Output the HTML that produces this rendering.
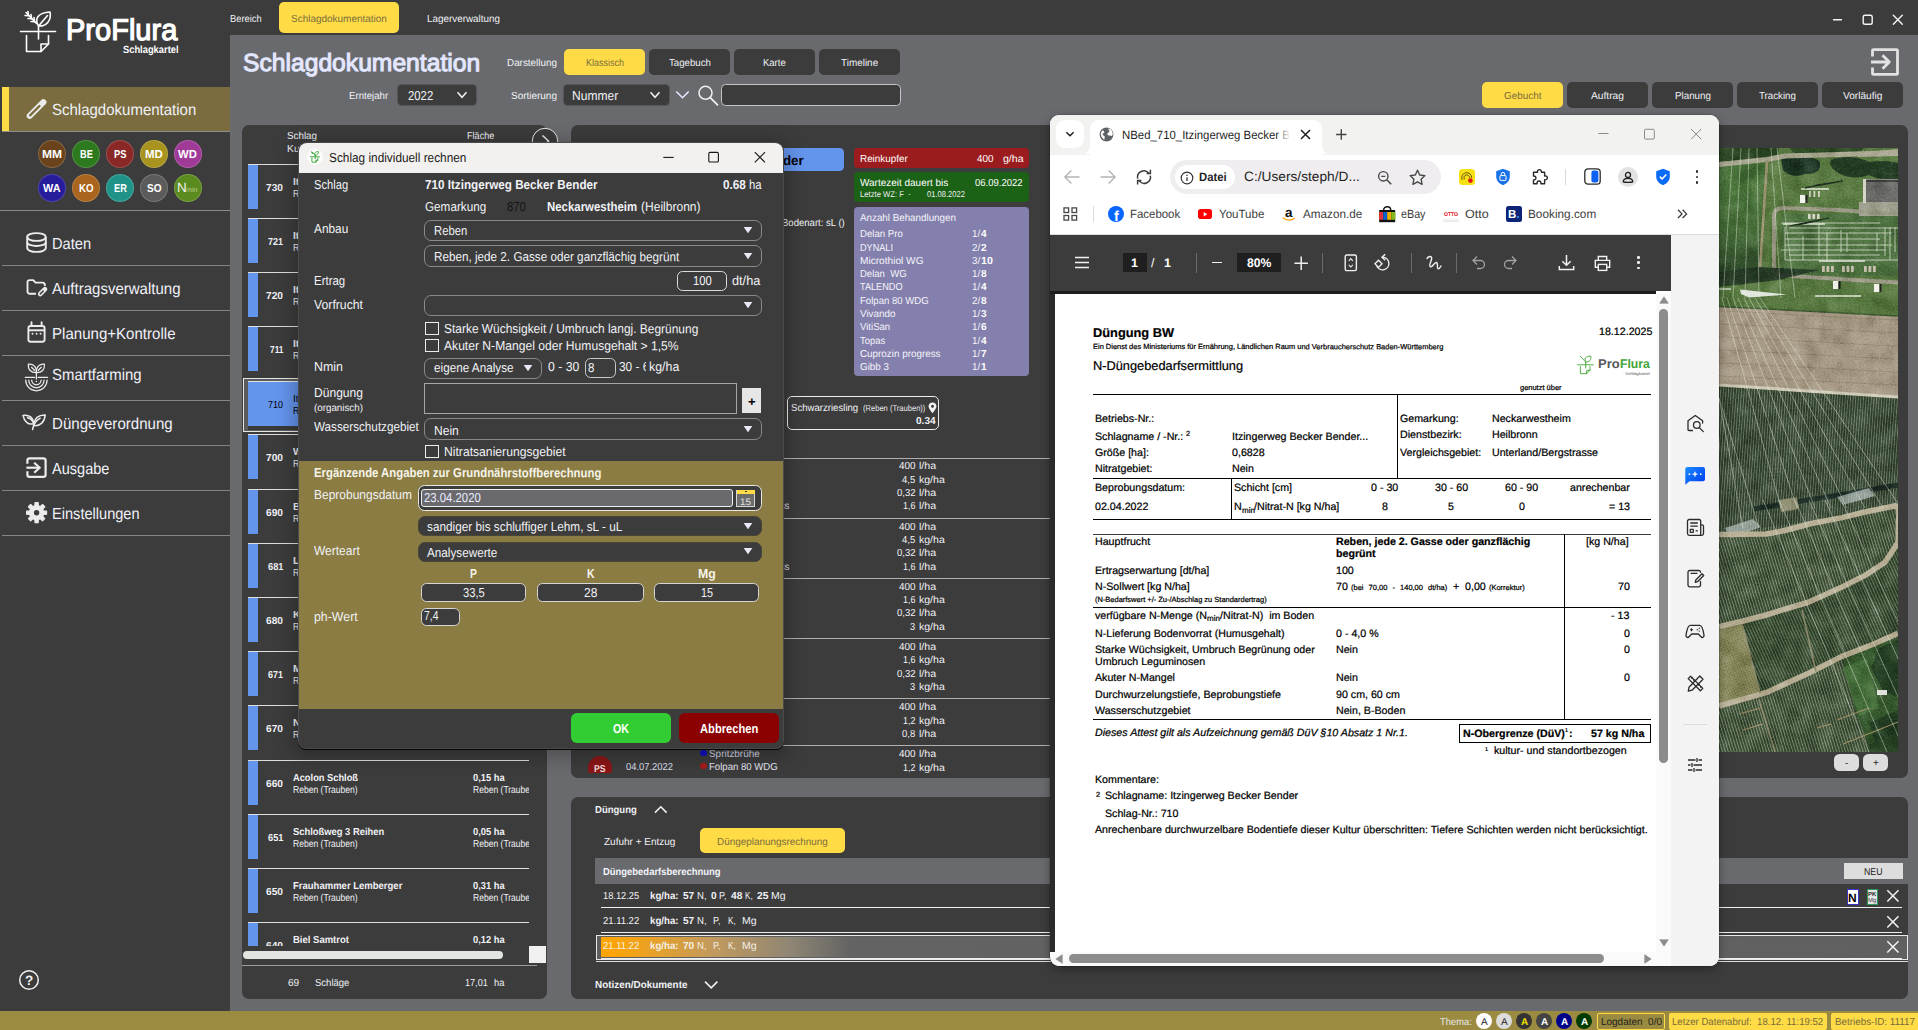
<!DOCTYPE html>
<html lang="de"><head><meta charset="utf-8"><title>ProFlura Schlagkartei</title>
<style>
html,body{margin:0;padding:0;}
body{width:1918px;height:1030px;overflow:hidden;background:#3c3c3c;position:relative;
font-family:"Liberation Sans",sans-serif;-webkit-font-smoothing:antialiased;}
div,svg{position:absolute;}
.t{white-space:nowrap;transform-origin:0 50%;}
.clip{overflow:hidden;}
svg{overflow:visible;}
svg text{font-family:"Liberation Sans",sans-serif;}
</style></head><body>
<!-- sec_base -->
<div style="left:230px;top:35px;width:1688px;height:976px;background:#696a6e;"></div>
<div style="left:0px;top:1011px;width:1918px;height:19px;background:#9a8b40;"></div>
<svg style="left:19px;top:9px;" width="40" height="46" viewBox="0 0 40 46">
<g fill="none" stroke="#fff" stroke-width="1.6" stroke-linecap="round" stroke-linejoin="round">
<path d="M1.5 22.5H36.5"/>
<path d="M7.5 26.5V42.5H22L29.5 35V26.5"/>
<path d="M22 42.5V35H29.5"/>
<path d="M19.5 30V17"/>
<path d="M19.5 17C15 10 19 3.5 31 3C32.5 11 28 17.5 19.500 17Z"/>
<path d="M20 16.500L28.500 6.500"/>
<path d="M17.5 14.5L7 3.5"/>
<path d="M6 6.500L10 6.800M9 2.500L9.500 6.500M9 9.500L13 9.800M12 5.500L12.500 9.500M12 12.500L15.500 12.800M15 8.500L15.500 12"/>
</g></svg>
<div class="t" style="left:65.5px;top:15px;font-size:30px;line-height:30px;color:#fff;transform:matrix(0.9679,0.0006,0,1,0,0);-webkit-text-stroke:1.2px #fff;">ProFlura</div>
<div class="t" style="left:122.5px;top:44px;font-size:10.5px;line-height:10.5px;color:#fff;font-weight:700;transform:matrix(0.8891,0.0006,0,1,0,0);">Schlagkartel</div>
<div style="left:2px;top:87px;width:228px;height:44px;background:#7a6c3e;"></div>
<div style="left:2px;top:87px;width:6.5px;height:44px;background:#ffdc46;"></div>
<div style="left:2px;top:131px;width:228px;height:1px;background:#8f8f8f;"></div>
<div style="left:0px;top:209.5px;width:230px;height:1.6px;background:#8a8a8a;"></div>
<div style="left:2px;top:264.5px;width:228px;height:1.3px;background:#858585;"></div>
<div style="left:2px;top:309.5px;width:228px;height:1.3px;background:#858585;"></div>
<div style="left:2px;top:354.5px;width:228px;height:1.3px;background:#858585;"></div>
<div style="left:2px;top:399.5px;width:228px;height:1.3px;background:#858585;"></div>
<div style="left:2px;top:444.5px;width:228px;height:1.3px;background:#858585;"></div>
<div style="left:2px;top:489.5px;width:228px;height:1.3px;background:#858585;"></div>
<div style="left:2px;top:534.5px;width:228px;height:1.3px;background:#858585;"></div>
<div class="t" style="left:52px;top:102px;font-size:16px;line-height:16px;color:#f0f1f8;transform:matrix(0.9375,0.0006,0,1,0,0);">Schlagdokumentation</div>
<div class="t" style="left:52px;top:236px;font-size:16px;line-height:16px;color:#f0f1f8;transform:matrix(0.9176,0.0006,0,1,0,0);">Daten</div>
<div class="t" style="left:52px;top:281px;font-size:16px;line-height:16px;color:#f0f1f8;transform:matrix(0.9382,0.0006,0,1,0,0);">Auftragsverwaltung</div>
<div class="t" style="left:52px;top:326px;font-size:16px;line-height:16px;color:#f0f1f8;transform:matrix(0.9413,0.0006,0,1,0,0);">Planung+Kontrolle</div>
<div class="t" style="left:52px;top:367px;font-size:16px;line-height:16px;color:#f0f1f8;transform:matrix(0.9333,0.0006,0,1,0,0);">Smartfarming</div>
<div class="t" style="left:52px;top:416px;font-size:16px;line-height:16px;color:#f0f1f8;transform:matrix(0.9424,0.0006,0,1,0,0);">Düngeverordnung</div>
<div class="t" style="left:52px;top:461px;font-size:16px;line-height:16px;color:#f0f1f8;transform:matrix(0.9098,0.0006,0,1,0,0);">Ausgabe</div>
<div class="t" style="left:52px;top:506px;font-size:16px;line-height:16px;color:#f0f1f8;transform:matrix(0.9117,0.0006,0,1,0,0);">Einstellungen</div>
<svg style="left:0px;top:0px;" width="60" height="540" viewBox="0 0 60 540"><path d="M29.700 115.800L43.400 102.100" stroke="#ececec" stroke-width="6" stroke-linecap="round" fill="none"/><path d="M30.100 115.400L39.500 106" stroke="#7a6c3e" stroke-width="2.300" stroke-linecap="round" fill="none"/><g fill="none" stroke="#ececec" stroke-width="1.900"><ellipse cx="36.500" cy="237" rx="9.300" ry="3.900"/><path d="M27.200 237V247.800C27.200 250.300 31.400 251.900 36.500 251.900C41.600 251.900 45.800 250.300 45.800 247.800V237"/><path d="M27.200 242.200C27.200 244.400 31.400 246 36.500 246C41.600 246 45.800 244.400 45.800 242.200"/></g><g fill="none" stroke="#ececec" stroke-width="1.900" stroke-linejoin="round" stroke-linecap="butt"><path d="M36 293.700H29.600A2.100 2.100 0 0 1 27.500 291.600V282.200A2.100 2.100 0 0 1 29.600 280.100H33.200L35.500 282.600H42.700A2.100 2.100 0 0 1 44.800 284.700V286"/></g><path d="M40.200 294L45 289.200" stroke="#ececec" stroke-width="4.600" stroke-linecap="round" fill="none"/><path d="M40.300 293.900L43.200 291" stroke="#3c3c3c" stroke-width="1.500" stroke-linecap="round" fill="none"/><g fill="none" stroke="#ececec" stroke-width="1.900"><rect x="28.400" y="326" width="16.200" height="15.700" rx="2.200"/><path d="M28.400 330.300H44.600"/><path d="M31.500 322.300V326M41.600 322.300V326" stroke-linecap="round"/></g><circle cx="32.5" cy="333.700" r="0.950" fill="#ececec"/><circle cx="36.6" cy="333.700" r="0.950" fill="#ececec"/><circle cx="40.6" cy="333.700" r="0.950" fill="#ececec"/><g fill="none" stroke="#ececec" stroke-width="1.250" stroke-linecap="round" stroke-linejoin="round"><path d="M36.400 379V372.400"/><path d="M36.400 372.600C31 372.800 27.800 369.500 28.400 364.200C33.300 363.600 36.600 366.400 36.400 372.600Z"/><path d="M36.400 372.600C41.800 372.800 45 369.500 44.400 364.200C39.500 363.600 36.200 366.400 36.400 372.600Z"/><path d="M31.500 367.300L34.500 370.300M41.300 367.300L38.300 370.300"/><path d="M25.300 377.400H34.600M38.200 377.400H47.600"/><path d="M31.700 380.100A4.700 4.700 0 0 0 41.100 380.100"/><path d="M28.700 380.100A7.700 7.700 0 0 0 44.100 380.100"/><path d="M25.700 380.100A10.700 10.700 0 0 0 47.100 380.100"/></g><circle cx="36.400" cy="381.500" r="0.800" fill="#ececec"/><g fill="none" stroke="#ececec" stroke-width="1.500" stroke-linecap="round" stroke-linejoin="round"><path d="M23 415.400C29.500 414.600 33.200 417.500 33.600 423.800C28 425 24.200 421.600 23 415.400Z"/><path d="M45.200 415C38.500 414.800 34 418 34 425.600C40.400 426.200 44.600 422 45.200 415Z"/><path d="M32.600 429.600C33.200 424.600 35.800 420.800 40.200 418.200"/><path d="M27.500 417.800C30.300 418.300 32 419.800 33 422"/></g><g fill="none" stroke="#ececec" stroke-width="2.200" stroke-linejoin="round" stroke-linecap="butt"><path d="M27.400 463.800V460.600A2.200 2.200 0 0 1 29.600 458.400H43.400A2.200 2.200 0 0 1 45.600 460.600V474.700A2.200 2.200 0 0 1 43.400 476.900H29.600A2.200 2.200 0 0 1 27.400 474.700V471.300"/><path d="M26.400 467.700H39.500"/><path d="M34.200 462.700L39.600 467.700L34.200 472.700" stroke-linejoin="miter"/></g><path d="M34.84 505.82L35.04 502.72L38.16 502.72L38.36 505.82L40.22 506.59L42.55 504.54L44.76 506.75L42.71 509.08L43.48 510.94L46.58 511.14L46.58 514.26L43.48 514.46L42.71 516.32L44.76 518.65L42.55 520.86L40.22 518.81L38.36 519.58L38.16 522.68L35.04 522.68L34.84 519.58L32.98 518.81L30.65 520.86L28.44 518.65L30.49 516.32L29.72 514.46L26.62 514.26L26.62 511.14L29.72 510.94L30.49 509.08L28.44 506.75L30.65 504.54L32.98 506.59Z" fill="#ececec" stroke="#ececec" stroke-width="1.200" stroke-linejoin="round"/><circle cx="36.6" cy="512.7" r="2.7" fill="#3c3c3c"/></svg>
<div style="left:37.8px;top:139.6px;width:28px;height:28px;background:#6a431d;border-radius:50%;box-shadow:inset 0 0 0 1px rgba(255,255,255,.18);"></div>
<div class="t" style="left:41.8px;top:149px;font-size:11.5px;line-height:11.5px;color:#fff;font-weight:700;transform:matrix(1.0445,0.0006,0,1,0,0);">MM</div>
<div style="left:72px;top:139.6px;width:28px;height:28px;background:#2d7a1e;border-radius:50%;box-shadow:inset 0 0 0 1px rgba(255,255,255,.18);"></div>
<div class="t" style="left:79.61px;top:149px;font-size:11.5px;line-height:11.5px;color:#fff;font-weight:700;transform:matrix(0.8000,0.0006,0,1,0,0);">BE</div>
<div style="left:105.9px;top:139.6px;width:28px;height:28px;background:#8a2828;border-radius:50%;box-shadow:inset 0 0 0 1px rgba(255,255,255,.18);"></div>
<div class="t" style="left:113.65px;top:149px;font-size:11.5px;line-height:11.5px;color:#fff;font-weight:700;transform:matrix(0.8142,0.0006,0,1,0,0);">PS</div>
<div style="left:139.9px;top:139.6px;width:28px;height:28px;background:#a7931d;border-radius:50%;box-shadow:inset 0 0 0 1px rgba(255,255,255,.18);"></div>
<div class="t" style="left:145px;top:149px;font-size:11.5px;line-height:11.5px;color:#fff;font-weight:700;transform:matrix(0.9954,0.0006,0,1,0,0);">MD</div>
<div style="left:173.8px;top:139.6px;width:28px;height:28px;background:#a03a97;border-radius:50%;box-shadow:inset 0 0 0 1px rgba(255,255,255,.18);"></div>
<div class="t" style="left:178.4px;top:149px;font-size:11.5px;line-height:11.5px;color:#fff;font-weight:700;transform:matrix(0.9819,0.0006,0,1,0,0);">WD</div>
<div style="left:37.8px;top:173.6px;width:28px;height:28px;background:#271c9a;border-radius:50%;box-shadow:inset 0 0 0 1px rgba(255,255,255,.18);"></div>
<div class="t" style="left:43.05px;top:183px;font-size:11.5px;line-height:11.5px;color:#fff;font-weight:700;transform:matrix(0.9452,0.0006,0,1,0,0);">WA</div>
<div style="left:72px;top:173.6px;width:28px;height:28px;background:#a9641d;border-radius:50%;box-shadow:inset 0 0 0 1px rgba(255,255,255,.18);"></div>
<div class="t" style="left:78.75px;top:183px;font-size:11.5px;line-height:11.5px;color:#fff;font-weight:700;transform:matrix(0.8406,0.0006,0,1,0,0);">KO</div>
<div style="left:105.9px;top:173.6px;width:28px;height:28px;background:#1f9387;border-radius:50%;box-shadow:inset 0 0 0 1px rgba(255,255,255,.18);"></div>
<div class="t" style="left:113.51px;top:183px;font-size:11.5px;line-height:11.5px;color:#fff;font-weight:700;transform:matrix(0.8000,0.0006,0,1,0,0);">ER</div>
<div style="left:139.9px;top:173.6px;width:28px;height:28px;background:#5b5b5b;border-radius:50%;box-shadow:inset 0 0 0 1px rgba(255,255,255,.18);"></div>
<div class="t" style="left:146.65px;top:183px;font-size:11.5px;line-height:11.5px;color:#fff;font-weight:700;transform:matrix(0.8726,0.0006,0,1,0,0);">SO</div>
<div style="left:173.8px;top:173.6px;width:28px;height:28px;background:#5b8a1e;border-radius:50%;box-shadow:inset 0 0 0 1px rgba(255,255,255,.18);"></div>
<div class="t" style="left:176.8px;top:181px;font-size:13.5px;line-height:13.5px;color:#f4f4f4;transform:matrix(1.0000,0.0006,0,1,0,0);">N</div>
<div class="t" style="left:186.4px;top:186px;font-size:7px;line-height:7px;color:#b9d08f;transform:matrix(1.0204,0.0006,0,1,0,0);">min</div>
<svg style="left:18px;top:969px;" width="22" height="22" viewBox="0 0 22 22"><circle cx="11" cy="11" r="9.3" fill="none" stroke="#f0f0f0" stroke-width="1.5"/></svg>
<div class="t" style="left:24.88px;top:974px;font-size:13.5px;line-height:13.5px;color:#f0f0f0;font-weight:700;transform:matrix(1.0000,0.0006,0,1,0,0);">?</div>
<div class="t" style="left:230.4px;top:14px;font-size:10.2px;line-height:10.2px;color:#f1f2f6;transform:matrix(0.9139,0.0006,0,1,0,0);">Bereich</div>
<div style="left:279.3px;top:2px;width:120px;height:31px;background:#ffdc46;border-radius:5px;"></div>
<div class="t" style="left:291.3px;top:14px;font-size:10.2px;line-height:10.2px;color:#7a6c3e;transform:matrix(0.9784,0.0006,0,1,0,0);">Schlagdokumentation</div>
<div class="t" style="left:426.5px;top:14px;font-size:10.2px;line-height:10.2px;color:#f1f2f6;transform:matrix(0.9678,0.0006,0,1,0,0);">Lagerverwaltung</div>
<svg style="left:1828px;top:10px;" width="80" height="20" viewBox="0 0 80 20">
<g fill="none" stroke="#f4f4f4" stroke-width="1.4" stroke-linecap="round">
<path d="M5.500 9.800H13.500"/>
<rect x="35.200" y="5.300" width="9" height="9" rx="1.800"/>
<path d="M65.300 5.300L74.300 14.300M74.300 5.300L65.300 14.300"/>
</g></svg>
<div class="t" style="left:242.8px;top:51px;font-size:24.7px;line-height:24.7px;color:#e3e7ff;transform:matrix(0.9987,0.0006,0,1,0,0);-webkit-text-stroke:1.05px #e3e7ff;">Schlagdokumentation</div>
<div class="t" style="left:506.8px;top:58px;font-size:10.2px;line-height:10.2px;color:#f1f2f6;transform:matrix(0.9688,0.0006,0,1,0,0);">Darstellung</div>
<div style="left:564px;top:49px;width:81px;height:26px;background:#ffdc46;border-radius:5px;"></div>
<div class="t" style="left:585.5px;top:58px;font-size:10.2px;line-height:10.2px;color:#7a6c3e;transform:matrix(0.8818,0.0006,0,1,0,0);">Klassisch</div>
<div style="left:649px;top:49px;width:81px;height:26px;background:#3c3c3c;border-radius:5px;"></div>
<div class="t" style="left:668.5px;top:58px;font-size:10.2px;line-height:10.2px;color:#f1f2f6;transform:matrix(0.9499,0.0006,0,1,0,0);">Tagebuch</div>
<div style="left:734px;top:49px;width:81px;height:26px;background:#3c3c3c;border-radius:5px;"></div>
<div class="t" style="left:763.15px;top:58px;font-size:10.2px;line-height:10.2px;color:#f1f2f6;transform:matrix(0.9312,0.0006,0,1,0,0);">Karte</div>
<div style="left:819px;top:49px;width:81px;height:26px;background:#3c3c3c;border-radius:5px;"></div>
<div class="t" style="left:840.9px;top:58px;font-size:10.2px;line-height:10.2px;color:#f1f2f6;transform:matrix(0.9751,0.0006,0,1,0,0);">Timeline</div>
<div class="t" style="left:349.2px;top:91px;font-size:10.2px;line-height:10.2px;color:#f1f2f6;transform:matrix(0.9466,0.0006,0,1,0,0);">Erntejahr</div>
<div style="left:397px;top:84px;width:79.5px;height:21.5px;background:#3c3c3c;border-radius:4.5px;border:1px solid #565656;box-sizing:border-box;"></div>
<div class="t" style="left:407.5px;top:89px;font-size:13px;line-height:13px;color:#f1f2f6;transform:matrix(0.8712,0.0006,0,1,0,0);">2022</div>
<svg style="left:455px;top:89px;" width="14" height="12" viewBox="0 0 14 12"><path d="M2.500 3.200L7 8.300L11.500 3.200" fill="none" stroke="#f2f2f2" stroke-width="1.5"/></svg>
<div class="t" style="left:510.8px;top:91px;font-size:10.2px;line-height:10.2px;color:#f1f2f6;transform:matrix(0.9772,0.0006,0,1,0,0);">Sortierung</div>
<div style="left:562.5px;top:84px;width:107.5px;height:21.5px;background:#3c3c3c;border-radius:4.5px;border:1px solid #565656;box-sizing:border-box;"></div>
<div class="t" style="left:572.2px;top:89px;font-size:13px;line-height:13px;color:#f1f2f6;transform:matrix(0.9287,0.0006,0,1,0,0);">Nummer</div>
<svg style="left:648px;top:89px;" width="14" height="12" viewBox="0 0 14 12"><path d="M2.500 3.200L7 8.300L11.500 3.200" fill="none" stroke="#f2f2f2" stroke-width="1.5"/></svg>
<svg style="left:674px;top:88px;" width="18" height="13" viewBox="0 0 18 13"><path d="M2.300 3.500L8.500 9.700L14.700 3.500" fill="none" stroke="#e3e7ff" stroke-width="1.6"/></svg>
<svg style="left:696px;top:83px;" width="24" height="24" viewBox="0 0 24 24"><circle cx="9.500" cy="9.800" r="6.500" fill="none" stroke="#f0f0f0" stroke-width="1.5"/><path d="M14.200 14.600L21.500 21.800" stroke="#f0f0f0" stroke-width="1.8" stroke-linecap="round"/></svg>
<div style="left:720.8px;top:84px;width:180.5px;height:21.5px;background:#3c3c3c;border-radius:4.5px;border:1px solid #c4c4c4;box-sizing:border-box;"></div>
<svg style="left:1868px;top:46px;" width="34" height="32" viewBox="0 0 34 32">
<g fill="none" stroke="#e2e2e2" stroke-width="2.800" stroke-linejoin="round" stroke-linecap="butt">
<path d="M4.500 10.500V4.600a1 1 0 0 1 1-1H28.500a1 1 0 0 1 1 1V27.400a1 1 0 0 1-1 1H5.500a1 1 0 0 1-1-1V21.500"/>
<path d="M3 16H21M14.500 9.300L21.300 16L14.500 22.700"/>
</g></svg>
<div style="left:1482.2px;top:82px;width:81px;height:26px;background:#ffdc46;border-radius:5px;"></div>
<div class="t" style="left:1503.95px;top:91px;font-size:10.2px;line-height:10.2px;color:#7a6c3e;transform:matrix(0.9726,0.0006,0,1,0,0);">Gebucht</div>
<div style="left:1567.2px;top:82px;width:81px;height:26px;background:#3c3c3c;border-radius:5px;"></div>
<div class="t" style="left:1591.2px;top:91px;font-size:10.2px;line-height:10.2px;color:#f1f2f6;transform:matrix(1.0032,0.0006,0,1,0,0);">Auftrag</div>
<div style="left:1652.2px;top:82px;width:81px;height:26px;background:#3c3c3c;border-radius:5px;"></div>
<div class="t" style="left:1674.7px;top:91px;font-size:10.2px;line-height:10.2px;color:#f1f2f6;transform:matrix(0.9617,0.0006,0,1,0,0);">Planung</div>
<div style="left:1737.2px;top:82px;width:81px;height:26px;background:#3c3c3c;border-radius:5px;"></div>
<div class="t" style="left:1759.2px;top:91px;font-size:10.2px;line-height:10.2px;color:#f1f2f6;transform:matrix(0.9546,0.0006,0,1,0,0);">Tracking</div>
<div style="left:1822.2px;top:82px;width:81px;height:26px;background:#3c3c3c;border-radius:5px;"></div>
<div class="t" style="left:1842.95px;top:91px;font-size:10.2px;line-height:10.2px;color:#f1f2f6;transform:matrix(0.9955,0.0006,0,1,0,0);">Vorläufig</div>
<div class="t" style="left:1440px;top:1017px;font-size:10px;line-height:10px;color:#e8e8e8;transform:matrix(0.9381,0.0006,0,1,0,0);">Thema:</div>
<div style="left:1476.4px;top:1013.3px;width:16px;height:16px;background:#fff;border-radius:50%;"></div>
<div class="t" style="left:1481.05px;top:1017px;font-size:10px;line-height:10px;color:#222;transform:matrix(1.0000,0.0006,0,1,0,0);">A</div>
<div style="left:1496.4px;top:1013.3px;width:16px;height:16px;background:#dcdcdc;border-radius:50%;"></div>
<div class="t" style="left:1501.05px;top:1017px;font-size:10px;line-height:10px;color:#222;transform:matrix(1.0000,0.0006,0,1,0,0);">A</div>
<div style="left:1516.4px;top:1013.3px;width:16px;height:16px;background:#333;border-radius:50%;"></div>
<div class="t" style="left:1520.8px;top:1017px;font-size:10px;line-height:10px;color:#f4e400;font-weight:700;transform:matrix(1.0000,0.0006,0,1,0,0);">A</div>
<div style="left:1536.4px;top:1013.3px;width:16px;height:16px;background:#444;border-radius:50%;"></div>
<div class="t" style="left:1540.8px;top:1017px;font-size:10px;line-height:10px;color:#fff;font-weight:700;transform:matrix(1.0000,0.0006,0,1,0,0);">A</div>
<div style="left:1556.4px;top:1013.3px;width:16px;height:16px;background:#00008b;border-radius:50%;"></div>
<div class="t" style="left:1560.8px;top:1017px;font-size:10px;line-height:10px;color:#fff;font-weight:700;transform:matrix(1.0000,0.0006,0,1,0,0);">A</div>
<div style="left:1576.4px;top:1013.3px;width:16px;height:16px;background:#003c00;border-radius:50%;"></div>
<div class="t" style="left:1580.8px;top:1017px;font-size:10px;line-height:10px;color:#fff;font-weight:700;transform:matrix(1.0000,0.0006,0,1,0,0);">A</div>
<div style="left:1597.4px;top:1013px;width:67.2px;height:17px;background:#9a8b40;border-radius:2px;border:1px solid #ffdc46;box-sizing:border-box;"></div>
<div class="t" style="left:1601px;top:1017px;font-size:10.2px;line-height:10.2px;color:#1e1e1e;transform:matrix(0.9780,0.0006,0,1,0,0);white-space:pre;">Logdaten  0/0</div>
<div style="left:1668.8px;top:1013px;width:158.4px;height:17px;background:#ffdc46;border-radius:2px;"></div>
<div class="t" style="left:1672.4px;top:1017px;font-size:10.2px;line-height:10.2px;color:#766a3a;transform:matrix(0.9445,0.0006,0,1,0,0);white-space:pre;">Letzer Datenabruf:  18.12. 11:19:52</div>
<div style="left:1830.8px;top:1013px;width:90px;height:17px;background:#ffdc46;border-radius:2px;"></div>
<div class="t" style="left:1834.7px;top:1017px;font-size:10.2px;line-height:10.2px;color:#766a3a;transform:matrix(0.9665,0.0006,0,1,0,0);">Betriebs-ID: 11117</div>
<!-- sec_list -->
<div style="left:242px;top:125px;width:304.5px;height:873.5px;background:#3c3c3c;border-radius:7px;"></div>
<div class="t" style="left:286.8px;top:131px;font-size:10.2px;line-height:10.2px;color:#f1f2f6;transform:matrix(0.9644,0.0006,0,1,0,0);">Schlag</div>
<div class="t" style="left:286.8px;top:144px;font-size:10.2px;line-height:10.2px;color:#f1f2f6;transform:matrix(1.0142,0.0006,0,1,0,0);">Kultur</div>
<div class="t" style="left:466.8px;top:131px;font-size:10.2px;line-height:10.2px;color:#f1f2f6;transform:matrix(0.8922,0.0006,0,1,0,0);">Fläche</div>
<svg style="left:531px;top:127px;" width="28" height="28" viewBox="0 0 28 28"><circle cx="14" cy="14" r="12.700" fill="#3c3c3c" stroke="#e8e8e8" stroke-width="1"/><path d="M11.500 8.500L17.500 14L11.500 19.500" fill="none" stroke="#e8e8e8" stroke-width="1.600"/></svg>
<div style="left:242px;top:160px;width:305px;height:786.3px;overflow:hidden;"><div style="left:-242px;top:-160px;width:1918px;height:1030px;"><div style="left:248px;top:164px;width:280.5px;height:1px;background:#dedede;"></div>
<div style="left:248px;top:165px;width:10px;height:44px;background:#6495ed;"></div>
<div class="t" style="left:266.4px;top:183px;font-size:10.2px;line-height:10.2px;color:#f1f2f6;font-weight:700;transform:matrix(0.9980,0.0006,0,1,0,0);">730</div>
<div class="t" style="left:293px;top:177px;font-size:10.2px;line-height:10.2px;color:#f1f2f6;font-weight:700;transform:matrix(1.0000,0.0006,0,1,0,0);">Itzingerweg Riesling</div>
<div class="t" style="left:293px;top:189px;font-size:10.2px;line-height:10.2px;color:#f1f2f6;transform:matrix(0.8381,0.0006,0,1,0,0);">Reben (Trauben)</div>
<div class="t" style="left:472.8px;top:177px;font-size:10.2px;line-height:10.2px;color:#f1f2f6;font-weight:700;transform:matrix(0.9141,0.0006,0,1,0,0);">0,22 ha</div>
<div style="left:472px;top:186px;width:57px;height:14px;overflow:hidden;"><div style="left:-472px;top:-186px;width:1918px;height:1030px;"><div class="t" style="left:472.8px;top:189px;font-size:10.2px;line-height:10.2px;color:#f1f2f6;transform:matrix(0.8381,0.0006,0,1,0,0);">Reben (Trauben)</div>
</div></div>
<div style="left:248px;top:218px;width:280.5px;height:1px;background:#dedede;"></div>
<div style="left:248px;top:219px;width:10px;height:44px;background:#6495ed;"></div>
<div class="t" style="left:268.4px;top:237px;font-size:10.2px;line-height:10.2px;color:#f1f2f6;font-weight:700;transform:matrix(0.8806,0.0006,0,1,0,0);">721</div>
<div class="t" style="left:293px;top:231px;font-size:10.2px;line-height:10.2px;color:#f1f2f6;font-weight:700;transform:matrix(1.0000,0.0006,0,1,0,0);">Itzingerweg Lemberger</div>
<div class="t" style="left:293px;top:243px;font-size:10.2px;line-height:10.2px;color:#f1f2f6;transform:matrix(0.8381,0.0006,0,1,0,0);">Reben (Trauben)</div>
<div class="t" style="left:472.8px;top:231px;font-size:10.2px;line-height:10.2px;color:#f1f2f6;font-weight:700;transform:matrix(0.9141,0.0006,0,1,0,0);">0,18 ha</div>
<div style="left:472px;top:240px;width:57px;height:14px;overflow:hidden;"><div style="left:-472px;top:-240px;width:1918px;height:1030px;"><div class="t" style="left:472.8px;top:243px;font-size:10.2px;line-height:10.2px;color:#f1f2f6;transform:matrix(0.8381,0.0006,0,1,0,0);">Reben (Trauben)</div>
</div></div>
<div style="left:248px;top:272px;width:280.5px;height:1px;background:#dedede;"></div>
<div style="left:248px;top:273px;width:10px;height:44px;background:#6495ed;"></div>
<div class="t" style="left:266.4px;top:291px;font-size:10.2px;line-height:10.2px;color:#f1f2f6;font-weight:700;transform:matrix(0.9980,0.0006,0,1,0,0);">720</div>
<div class="t" style="left:293px;top:285px;font-size:10.2px;line-height:10.2px;color:#f1f2f6;font-weight:700;transform:matrix(1.0000,0.0006,0,1,0,0);">Itzingerweg Trollinger</div>
<div class="t" style="left:293px;top:297px;font-size:10.2px;line-height:10.2px;color:#f1f2f6;transform:matrix(0.8381,0.0006,0,1,0,0);">Reben (Trauben)</div>
<div class="t" style="left:472.8px;top:285px;font-size:10.2px;line-height:10.2px;color:#f1f2f6;font-weight:700;transform:matrix(0.9141,0.0006,0,1,0,0);">0,25 ha</div>
<div style="left:472px;top:294px;width:57px;height:14px;overflow:hidden;"><div style="left:-472px;top:-294px;width:1918px;height:1030px;"><div class="t" style="left:472.8px;top:297px;font-size:10.2px;line-height:10.2px;color:#f1f2f6;transform:matrix(0.8381,0.0006,0,1,0,0);">Reben (Trauben)</div>
</div></div>
<div style="left:248px;top:326px;width:280.5px;height:1px;background:#dedede;"></div>
<div style="left:248px;top:327px;width:10px;height:44px;background:#6495ed;"></div>
<div class="t" style="left:269.9px;top:345px;font-size:10.2px;line-height:10.2px;color:#f1f2f6;font-weight:700;transform:matrix(0.8195,0.0006,0,1,0,0);">711</div>
<div class="t" style="left:293px;top:339px;font-size:10.2px;line-height:10.2px;color:#f1f2f6;font-weight:700;transform:matrix(1.0000,0.0006,0,1,0,0);">Itzingerweg Becker</div>
<div class="t" style="left:293px;top:351px;font-size:10.2px;line-height:10.2px;color:#f1f2f6;transform:matrix(0.8381,0.0006,0,1,0,0);">Reben (Trauben)</div>
<div class="t" style="left:472.8px;top:339px;font-size:10.2px;line-height:10.2px;color:#f1f2f6;font-weight:700;transform:matrix(0.9291,0.0006,0,1,0,0);">0,11 ha</div>
<div style="left:472px;top:348px;width:57px;height:14px;overflow:hidden;"><div style="left:-472px;top:-348px;width:1918px;height:1030px;"><div class="t" style="left:472.8px;top:351px;font-size:10.2px;line-height:10.2px;color:#f1f2f6;transform:matrix(0.8381,0.0006,0,1,0,0);">Reben (Trauben)</div>
</div></div>
<div style="left:243px;top:378px;width:303px;height:54px;background:#5b5b5b;border:1.5px solid #e6e6e6;box-sizing:border-box;"></div>
<div style="left:248px;top:381.5px;width:298px;height:44.5px;background:linear-gradient(90deg,#6495ed 0%,#6495ed 12%,#5d8bdc 30%,#5d8bdc 100%);"></div>
<div style="left:248px;top:380.5px;width:298px;height:1px;background:#e4e4e4;"></div>
<div style="left:248px;top:426px;width:298px;height:3.5px;background:#3a3a3a;"></div>
<div class="t" style="left:268px;top:400px;font-size:10.2px;line-height:10.2px;color:#000;transform:matrix(0.8806,0.0006,0,1,0,0);">710</div>
<div class="t" style="left:293px;top:394px;font-size:10.2px;line-height:10.2px;color:#000;transform:matrix(1.0000,0.0006,0,1,0,0);">Itzingerweg Becker Bender</div>
<div class="t" style="left:293px;top:406px;font-size:10.2px;line-height:10.2px;color:#000;transform:matrix(0.8381,0.0006,0,1,0,0);">Reben (Trauben)</div>
<div class="t" style="left:472.8px;top:393px;font-size:10.2px;line-height:10.2px;color:#000;transform:matrix(0.9305,0.0006,0,1,0,0);">0,68 ha</div>
<div style="left:472px;top:402px;width:57px;height:14px;overflow:hidden;"><div style="left:-472px;top:-402px;width:1918px;height:1030px;"><div class="t" style="left:472.8px;top:405px;font-size:10.2px;line-height:10.2px;color:#000;transform:matrix(0.8381,0.0006,0,1,0,0);">Reben (Trauben)</div>
</div></div>
<div style="left:248px;top:434px;width:280.5px;height:1px;background:#dedede;"></div>
<div style="left:248px;top:435px;width:10px;height:44px;background:#6495ed;"></div>
<div class="t" style="left:266.4px;top:453px;font-size:10.2px;line-height:10.2px;color:#f1f2f6;font-weight:700;transform:matrix(0.9980,0.0006,0,1,0,0);">700</div>
<div class="t" style="left:293px;top:447px;font-size:10.2px;line-height:10.2px;color:#f1f2f6;font-weight:700;transform:matrix(1.0000,0.0006,0,1,0,0);">Wengert Kerner</div>
<div class="t" style="left:293px;top:459px;font-size:10.2px;line-height:10.2px;color:#f1f2f6;transform:matrix(0.8381,0.0006,0,1,0,0);">Reben (Trauben)</div>
<div class="t" style="left:472.8px;top:447px;font-size:10.2px;line-height:10.2px;color:#f1f2f6;font-weight:700;transform:matrix(0.9141,0.0006,0,1,0,0);">0,14 ha</div>
<div style="left:472px;top:456px;width:57px;height:14px;overflow:hidden;"><div style="left:-472px;top:-456px;width:1918px;height:1030px;"><div class="t" style="left:472.8px;top:459px;font-size:10.2px;line-height:10.2px;color:#f1f2f6;transform:matrix(0.8381,0.0006,0,1,0,0);">Reben (Trauben)</div>
</div></div>
<div style="left:248px;top:489px;width:280.5px;height:1px;background:#dedede;"></div>
<div style="left:248px;top:490px;width:10px;height:44px;background:#6495ed;"></div>
<div class="t" style="left:266.4px;top:508px;font-size:10.2px;line-height:10.2px;color:#f1f2f6;font-weight:700;transform:matrix(0.9980,0.0006,0,1,0,0);">690</div>
<div class="t" style="left:293px;top:502px;font-size:10.2px;line-height:10.2px;color:#f1f2f6;font-weight:700;transform:matrix(1.0000,0.0006,0,1,0,0);">Berg Spätburgunder</div>
<div class="t" style="left:293px;top:514px;font-size:10.2px;line-height:10.2px;color:#f1f2f6;transform:matrix(0.8381,0.0006,0,1,0,0);">Reben (Trauben)</div>
<div class="t" style="left:472.8px;top:502px;font-size:10.2px;line-height:10.2px;color:#f1f2f6;font-weight:700;transform:matrix(0.9141,0.0006,0,1,0,0);">0,27 ha</div>
<div style="left:472px;top:511px;width:57px;height:14px;overflow:hidden;"><div style="left:-472px;top:-511px;width:1918px;height:1030px;"><div class="t" style="left:472.8px;top:514px;font-size:10.2px;line-height:10.2px;color:#f1f2f6;transform:matrix(0.8381,0.0006,0,1,0,0);">Reben (Trauben)</div>
</div></div>
<div style="left:248px;top:543px;width:280.5px;height:1px;background:#dedede;"></div>
<div style="left:248px;top:544px;width:10px;height:44px;background:#6495ed;"></div>
<div class="t" style="left:267.9px;top:562px;font-size:10.2px;line-height:10.2px;color:#f1f2f6;font-weight:700;transform:matrix(0.9099,0.0006,0,1,0,0);">681</div>
<div class="t" style="left:293px;top:556px;font-size:10.2px;line-height:10.2px;color:#f1f2f6;font-weight:700;transform:matrix(1.0000,0.0006,0,1,0,0);">Liebenstein Riesling</div>
<div class="t" style="left:293px;top:568px;font-size:10.2px;line-height:10.2px;color:#f1f2f6;transform:matrix(0.8381,0.0006,0,1,0,0);">Reben (Trauben)</div>
<div class="t" style="left:472.8px;top:556px;font-size:10.2px;line-height:10.2px;color:#f1f2f6;font-weight:700;transform:matrix(0.9141,0.0006,0,1,0,0);">0,09 ha</div>
<div style="left:472px;top:565px;width:57px;height:14px;overflow:hidden;"><div style="left:-472px;top:-565px;width:1918px;height:1030px;"><div class="t" style="left:472.8px;top:568px;font-size:10.2px;line-height:10.2px;color:#f1f2f6;transform:matrix(0.8381,0.0006,0,1,0,0);">Reben (Trauben)</div>
</div></div>
<div style="left:248px;top:597px;width:280.5px;height:1px;background:#dedede;"></div>
<div style="left:248px;top:598px;width:10px;height:44px;background:#6495ed;"></div>
<div class="t" style="left:266.4px;top:616px;font-size:10.2px;line-height:10.2px;color:#f1f2f6;font-weight:700;transform:matrix(0.9980,0.0006,0,1,0,0);">680</div>
<div class="t" style="left:293px;top:610px;font-size:10.2px;line-height:10.2px;color:#f1f2f6;font-weight:700;transform:matrix(1.0000,0.0006,0,1,0,0);">Kirchberg Trollinger</div>
<div class="t" style="left:293px;top:622px;font-size:10.2px;line-height:10.2px;color:#f1f2f6;transform:matrix(0.8381,0.0006,0,1,0,0);">Reben (Trauben)</div>
<div class="t" style="left:472.8px;top:610px;font-size:10.2px;line-height:10.2px;color:#f1f2f6;font-weight:700;transform:matrix(0.9141,0.0006,0,1,0,0);">0,21 ha</div>
<div style="left:472px;top:619px;width:57px;height:14px;overflow:hidden;"><div style="left:-472px;top:-619px;width:1918px;height:1030px;"><div class="t" style="left:472.8px;top:622px;font-size:10.2px;line-height:10.2px;color:#f1f2f6;transform:matrix(0.8381,0.0006,0,1,0,0);">Reben (Trauben)</div>
</div></div>
<div style="left:248px;top:651px;width:280.5px;height:1px;background:#dedede;"></div>
<div style="left:248px;top:652px;width:10px;height:44px;background:#6495ed;"></div>
<div class="t" style="left:268.4px;top:670px;font-size:10.2px;line-height:10.2px;color:#f1f2f6;font-weight:700;transform:matrix(0.8806,0.0006,0,1,0,0);">671</div>
<div class="t" style="left:293px;top:664px;font-size:10.2px;line-height:10.2px;color:#f1f2f6;font-weight:700;transform:matrix(1.0000,0.0006,0,1,0,0);">Mühlberg Muskateller</div>
<div class="t" style="left:293px;top:676px;font-size:10.2px;line-height:10.2px;color:#f1f2f6;transform:matrix(0.8381,0.0006,0,1,0,0);">Reben (Trauben)</div>
<div class="t" style="left:472.8px;top:664px;font-size:10.2px;line-height:10.2px;color:#f1f2f6;font-weight:700;transform:matrix(0.9141,0.0006,0,1,0,0);">0,16 ha</div>
<div style="left:472px;top:673px;width:57px;height:14px;overflow:hidden;"><div style="left:-472px;top:-673px;width:1918px;height:1030px;"><div class="t" style="left:472.8px;top:676px;font-size:10.2px;line-height:10.2px;color:#f1f2f6;transform:matrix(0.8381,0.0006,0,1,0,0);">Reben (Trauben)</div>
</div></div>
<div style="left:248px;top:705px;width:280.5px;height:1px;background:#dedede;"></div>
<div style="left:248px;top:706px;width:10px;height:44px;background:#6495ed;"></div>
<div class="t" style="left:266.4px;top:724px;font-size:10.2px;line-height:10.2px;color:#f1f2f6;font-weight:700;transform:matrix(0.9980,0.0006,0,1,0,0);">670</div>
<div class="t" style="left:293px;top:718px;font-size:10.2px;line-height:10.2px;color:#f1f2f6;font-weight:700;transform:matrix(1.0000,0.0006,0,1,0,0);">Neuberg Lemberger</div>
<div class="t" style="left:293px;top:730px;font-size:10.2px;line-height:10.2px;color:#f1f2f6;transform:matrix(0.8381,0.0006,0,1,0,0);">Reben (Trauben)</div>
<div class="t" style="left:472.8px;top:718px;font-size:10.2px;line-height:10.2px;color:#f1f2f6;font-weight:700;transform:matrix(0.9141,0.0006,0,1,0,0);">0,19 ha</div>
<div style="left:472px;top:727px;width:57px;height:14px;overflow:hidden;"><div style="left:-472px;top:-727px;width:1918px;height:1030px;"><div class="t" style="left:472.8px;top:730px;font-size:10.2px;line-height:10.2px;color:#f1f2f6;transform:matrix(0.8381,0.0006,0,1,0,0);">Reben (Trauben)</div>
</div></div>
<div style="left:248px;top:760px;width:280.5px;height:1px;background:#dedede;"></div>
<div style="left:248px;top:761px;width:10px;height:44px;background:#6495ed;"></div>
<div class="t" style="left:266.4px;top:779px;font-size:10.2px;line-height:10.2px;color:#f1f2f6;font-weight:700;transform:matrix(0.9980,0.0006,0,1,0,0);">660</div>
<div class="t" style="left:293px;top:773px;font-size:10.2px;line-height:10.2px;color:#f1f2f6;font-weight:700;transform:matrix(0.9118,0.0006,0,1,0,0);">Acolon Schloß</div>
<div class="t" style="left:293px;top:785px;font-size:10.2px;line-height:10.2px;color:#f1f2f6;transform:matrix(0.8381,0.0006,0,1,0,0);">Reben (Trauben)</div>
<div class="t" style="left:472.8px;top:773px;font-size:10.2px;line-height:10.2px;color:#f1f2f6;font-weight:700;transform:matrix(0.9141,0.0006,0,1,0,0);">0,15 ha</div>
<div style="left:472px;top:782px;width:57px;height:14px;overflow:hidden;"><div style="left:-472px;top:-782px;width:1918px;height:1030px;"><div class="t" style="left:472.8px;top:785px;font-size:10.2px;line-height:10.2px;color:#f1f2f6;transform:matrix(0.8381,0.0006,0,1,0,0);">Reben (Trauben)</div>
</div></div>
<div style="left:248px;top:814px;width:280.5px;height:1px;background:#dedede;"></div>
<div style="left:248px;top:815px;width:10px;height:44px;background:#6495ed;"></div>
<div class="t" style="left:267.9px;top:833px;font-size:10.2px;line-height:10.2px;color:#f1f2f6;font-weight:700;transform:matrix(0.9099,0.0006,0,1,0,0);">651</div>
<div class="t" style="left:293px;top:827px;font-size:10.2px;line-height:10.2px;color:#f1f2f6;font-weight:700;transform:matrix(0.9204,0.0006,0,1,0,0);">Schloßweg 3 Reihen</div>
<div class="t" style="left:293px;top:839px;font-size:10.2px;line-height:10.2px;color:#f1f2f6;transform:matrix(0.8381,0.0006,0,1,0,0);">Reben (Trauben)</div>
<div class="t" style="left:472.8px;top:827px;font-size:10.2px;line-height:10.2px;color:#f1f2f6;font-weight:700;transform:matrix(0.9141,0.0006,0,1,0,0);">0,05 ha</div>
<div style="left:472px;top:836px;width:57px;height:14px;overflow:hidden;"><div style="left:-472px;top:-836px;width:1918px;height:1030px;"><div class="t" style="left:472.8px;top:839px;font-size:10.2px;line-height:10.2px;color:#f1f2f6;transform:matrix(0.8381,0.0006,0,1,0,0);">Reben (Trauben)</div>
</div></div>
<div style="left:248px;top:868px;width:280.5px;height:1px;background:#dedede;"></div>
<div style="left:248px;top:869px;width:10px;height:44px;background:#6495ed;"></div>
<div class="t" style="left:266.4px;top:887px;font-size:10.2px;line-height:10.2px;color:#f1f2f6;font-weight:700;transform:matrix(0.9980,0.0006,0,1,0,0);">650</div>
<div class="t" style="left:293px;top:881px;font-size:10.2px;line-height:10.2px;color:#f1f2f6;font-weight:700;transform:matrix(0.9331,0.0006,0,1,0,0);">Frauhammer Lemberger</div>
<div class="t" style="left:293px;top:893px;font-size:10.2px;line-height:10.2px;color:#f1f2f6;transform:matrix(0.8381,0.0006,0,1,0,0);">Reben (Trauben)</div>
<div class="t" style="left:472.8px;top:881px;font-size:10.2px;line-height:10.2px;color:#f1f2f6;font-weight:700;transform:matrix(0.9141,0.0006,0,1,0,0);">0,31 ha</div>
<div style="left:472px;top:890px;width:57px;height:14px;overflow:hidden;"><div style="left:-472px;top:-890px;width:1918px;height:1030px;"><div class="t" style="left:472.8px;top:893px;font-size:10.2px;line-height:10.2px;color:#f1f2f6;transform:matrix(0.8381,0.0006,0,1,0,0);">Reben (Trauben)</div>
</div></div>
<div style="left:248px;top:922px;width:280.5px;height:1px;background:#dedede;"></div>
<div style="left:248px;top:923px;width:10px;height:44px;background:#6495ed;"></div>
<div class="t" style="left:266.4px;top:941px;font-size:10.2px;line-height:10.2px;color:#f1f2f6;font-weight:700;transform:matrix(0.9980,0.0006,0,1,0,0);">640</div>
<div class="t" style="left:293px;top:935px;font-size:10.2px;line-height:10.2px;color:#f1f2f6;font-weight:700;transform:matrix(0.9321,0.0006,0,1,0,0);">Biel Samtrot</div>
<div class="t" style="left:293px;top:947px;font-size:10.2px;line-height:10.2px;color:#f1f2f6;transform:matrix(0.8381,0.0006,0,1,0,0);">Reben (Trauben)</div>
<div class="t" style="left:472.8px;top:935px;font-size:10.2px;line-height:10.2px;color:#f1f2f6;font-weight:700;transform:matrix(0.9141,0.0006,0,1,0,0);">0,12 ha</div>
<div style="left:472px;top:944px;width:57px;height:14px;overflow:hidden;"><div style="left:-472px;top:-944px;width:1918px;height:1030px;"><div class="t" style="left:472.8px;top:947px;font-size:10.2px;line-height:10.2px;color:#f1f2f6;transform:matrix(0.8381,0.0006,0,1,0,0);">Reben (Trauben)</div>
</div></div>
</div></div>
<div style="left:243px;top:950.8px;width:259.7px;height:8px;background:#e2e4e2;border-radius:4px;"></div>
<div style="left:528.7px;top:946.2px;width:17px;height:16.6px;background:#f0f0f0;"></div>
<div style="left:242px;top:964.5px;width:295px;height:1.5px;background:#9c9c9c;"></div>
<div class="t" style="left:288.4px;top:978px;font-size:10.2px;line-height:10.2px;color:#f1f2f6;transform:matrix(0.9892,0.0006,0,1,0,0);">69</div>
<div class="t" style="left:314.6px;top:978px;font-size:10.2px;line-height:10.2px;color:#f1f2f6;transform:matrix(0.9329,0.0006,0,1,0,0);">Schläge</div>
<div class="t" style="left:465.4px;top:978px;font-size:10.2px;line-height:10.2px;color:#f1f2f6;transform:matrix(0.8923,0.0006,0,1,0,0);">17,01</div>
<div class="t" style="left:493.6px;top:978px;font-size:10.2px;line-height:10.2px;color:#f1f2f6;transform:matrix(0.9144,0.0006,0,1,0,0);">ha</div>
<!-- sec_mid -->
<div style="left:571px;top:125px;width:1337px;height:653px;background:#3c3c3c;border-radius:7px;"></div>
<div style="left:580px;top:148px;width:264.2px;height:22.7px;background:#6495ed;border-radius:4.5px;"></div>
<div class="t" style="left:606.76px;top:154px;font-size:13.3px;line-height:13.3px;color:#000;font-weight:700;transform:matrix(1.0000,0.0006,0,1,0,0);">710 Itzingerweg Becker Bender</div>
<div class="t" style="left:781.5px;top:218px;font-size:10.2px;line-height:10.2px;color:#f1f2f6;transform:matrix(0.9364,0.0006,0,1,0,0);">Bodenart: sL ()</div>
<div style="left:854px;top:148px;width:175px;height:19.5px;background:#9b1c1e;border-radius:4px;"></div>
<div class="t" style="left:860px;top:154px;font-size:10.2px;line-height:10.2px;color:#fff;transform:matrix(0.9692,0.0006,0,1,0,0);">Reinkupfer</div>
<div class="t" style="left:977px;top:154px;font-size:10.2px;line-height:10.2px;color:#fff;transform:matrix(0.9687,0.0006,0,1,0,0);">400</div>
<div class="t" style="left:1002.6px;top:154px;font-size:10.2px;line-height:10.2px;color:#fff;transform:matrix(1.0357,0.0006,0,1,0,0);">g/ha</div>
<div style="left:854px;top:172.3px;width:175px;height:29.8px;background:#1b6116;border-radius:4px;"></div>
<div class="t" style="left:860px;top:178px;font-size:10.2px;line-height:10.2px;color:#fff;transform:matrix(0.9787,0.0006,0,1,0,0);">Wartezeit dauert bis</div>
<div class="t" style="left:975.4px;top:178px;font-size:10.2px;line-height:10.2px;color:#fff;transform:matrix(0.9324,0.0006,0,1,0,0);">06.09.2022</div>
<div class="t" style="left:860px;top:190px;font-size:8.5px;line-height:8.5px;color:#f0f0f0;transform:matrix(0.9042,0.0006,0,1,0,0);white-space:pre;">Letzte WZ: F  -</div>
<div class="t" style="left:927px;top:190px;font-size:8.5px;line-height:8.5px;color:#f0f0f0;transform:matrix(0.8932,0.0006,0,1,0,0);">01.08.2022</div>
<div style="left:854px;top:207px;width:175px;height:169px;background:#8480ad;border-radius:4px;"></div>
<div class="t" style="left:860px;top:213px;font-size:10.2px;line-height:10.2px;color:#f4f4fa;transform:matrix(0.9619,0.0006,0,1,0,0);">Anzahl Behandlungen</div>
<div class="t" style="left:860.3px;top:229px;font-size:10.2px;line-height:10.2px;color:#f4f4fa;transform:matrix(0.9440,0.0006,0,1,0,0);white-space:pre;">Delan Pro</div>
<div class="t" style="left:972.3px;top:229px;font-size:10.2px;line-height:10.2px;color:#f4f4fa;transform:matrix(0.9628,0.0006,0,1,0,0);">1/</div>
<div class="t" style="left:981.2px;top:229px;font-size:10.2px;line-height:10.2px;color:#fff;font-weight:700;transform:matrix(0.9892,0.0006,0,1,0,0);">4</div>
<div class="t" style="left:860.3px;top:243px;font-size:10.2px;line-height:10.2px;color:#f4f4fa;transform:matrix(0.8962,0.0006,0,1,0,0);white-space:pre;">DYNALI</div>
<div class="t" style="left:972.3px;top:243px;font-size:10.2px;line-height:10.2px;color:#f4f4fa;transform:matrix(0.9628,0.0006,0,1,0,0);">2/</div>
<div class="t" style="left:981.2px;top:243px;font-size:10.2px;line-height:10.2px;color:#fff;font-weight:700;transform:matrix(0.9892,0.0006,0,1,0,0);">2</div>
<div class="t" style="left:860.3px;top:256px;font-size:10.2px;line-height:10.2px;color:#f4f4fa;transform:matrix(0.9929,0.0006,0,1,0,0);white-space:pre;">Microthiol WG</div>
<div class="t" style="left:972.3px;top:256px;font-size:10.2px;line-height:10.2px;color:#f4f4fa;transform:matrix(0.9628,0.0006,0,1,0,0);">3/</div>
<div class="t" style="left:981.2px;top:256px;font-size:10.2px;line-height:10.2px;color:#fff;font-weight:700;transform:matrix(1.0422,0.0006,0,1,0,0);">10</div>
<div class="t" style="left:860.3px;top:269px;font-size:10.2px;line-height:10.2px;color:#f4f4fa;transform:matrix(0.9343,0.0006,0,1,0,0);white-space:pre;">Delan  WG</div>
<div class="t" style="left:972.3px;top:269px;font-size:10.2px;line-height:10.2px;color:#f4f4fa;transform:matrix(0.9628,0.0006,0,1,0,0);">1/</div>
<div class="t" style="left:981.2px;top:269px;font-size:10.2px;line-height:10.2px;color:#fff;font-weight:700;transform:matrix(0.9892,0.0006,0,1,0,0);">8</div>
<div class="t" style="left:860.3px;top:282px;font-size:10.2px;line-height:10.2px;color:#f4f4fa;transform:matrix(0.8982,0.0006,0,1,0,0);white-space:pre;">TALENDO</div>
<div class="t" style="left:972.3px;top:282px;font-size:10.2px;line-height:10.2px;color:#f4f4fa;transform:matrix(0.9628,0.0006,0,1,0,0);">1/</div>
<div class="t" style="left:981.2px;top:282px;font-size:10.2px;line-height:10.2px;color:#fff;font-weight:700;transform:matrix(0.9892,0.0006,0,1,0,0);">4</div>
<div class="t" style="left:860.3px;top:296px;font-size:10.2px;line-height:10.2px;color:#f4f4fa;transform:matrix(0.9407,0.0006,0,1,0,0);white-space:pre;">Folpan 80 WDG</div>
<div class="t" style="left:972.3px;top:296px;font-size:10.2px;line-height:10.2px;color:#f4f4fa;transform:matrix(0.9628,0.0006,0,1,0,0);">2/</div>
<div class="t" style="left:981.2px;top:296px;font-size:10.2px;line-height:10.2px;color:#fff;font-weight:700;transform:matrix(0.9892,0.0006,0,1,0,0);">8</div>
<div class="t" style="left:860.3px;top:309px;font-size:10.2px;line-height:10.2px;color:#f4f4fa;transform:matrix(0.9708,0.0006,0,1,0,0);white-space:pre;">Vivando</div>
<div class="t" style="left:972.3px;top:309px;font-size:10.2px;line-height:10.2px;color:#f4f4fa;transform:matrix(0.9628,0.0006,0,1,0,0);">1/</div>
<div class="t" style="left:981.2px;top:309px;font-size:10.2px;line-height:10.2px;color:#fff;font-weight:700;transform:matrix(0.9892,0.0006,0,1,0,0);">3</div>
<div class="t" style="left:860.3px;top:322px;font-size:10.2px;line-height:10.2px;color:#f4f4fa;transform:matrix(0.9399,0.0006,0,1,0,0);white-space:pre;">VitiSan</div>
<div class="t" style="left:972.3px;top:322px;font-size:10.2px;line-height:10.2px;color:#f4f4fa;transform:matrix(0.9628,0.0006,0,1,0,0);">1/</div>
<div class="t" style="left:981.2px;top:322px;font-size:10.2px;line-height:10.2px;color:#fff;font-weight:700;transform:matrix(0.9892,0.0006,0,1,0,0);">6</div>
<div class="t" style="left:860.3px;top:336px;font-size:10.2px;line-height:10.2px;color:#f4f4fa;transform:matrix(0.9253,0.0006,0,1,0,0);white-space:pre;">Topas</div>
<div class="t" style="left:972.3px;top:336px;font-size:10.2px;line-height:10.2px;color:#f4f4fa;transform:matrix(0.9628,0.0006,0,1,0,0);">1/</div>
<div class="t" style="left:981.2px;top:336px;font-size:10.2px;line-height:10.2px;color:#fff;font-weight:700;transform:matrix(0.9892,0.0006,0,1,0,0);">4</div>
<div class="t" style="left:860.3px;top:349px;font-size:10.2px;line-height:10.2px;color:#f4f4fa;transform:matrix(0.9672,0.0006,0,1,0,0);white-space:pre;">Cuprozin progress</div>
<div class="t" style="left:972.3px;top:349px;font-size:10.2px;line-height:10.2px;color:#f4f4fa;transform:matrix(0.9628,0.0006,0,1,0,0);">1/</div>
<div class="t" style="left:981.2px;top:349px;font-size:10.2px;line-height:10.2px;color:#fff;font-weight:700;transform:matrix(0.9892,0.0006,0,1,0,0);">7</div>
<div class="t" style="left:860.3px;top:362px;font-size:10.2px;line-height:10.2px;color:#f4f4fa;transform:matrix(0.9654,0.0006,0,1,0,0);white-space:pre;">Gibb 3</div>
<div class="t" style="left:972.3px;top:362px;font-size:10.2px;line-height:10.2px;color:#f4f4fa;transform:matrix(0.9628,0.0006,0,1,0,0);">1/</div>
<div class="t" style="left:981.2px;top:362px;font-size:10.2px;line-height:10.2px;color:#fff;font-weight:700;transform:matrix(0.9892,0.0006,0,1,0,0);">1</div>
<div style="left:787px;top:396px;width:152px;height:34px;background:#3c3c3c;border-radius:5px;border:1px solid #ededed;box-sizing:border-box;"></div>
<div class="t" style="left:790.7px;top:403px;font-size:10.2px;line-height:10.2px;color:#f1f2f6;transform:matrix(0.9419,0.0006,0,1,0,0);">Schwarzriesling</div>
<div class="t" style="left:863.2px;top:404px;font-size:8.5px;line-height:8.5px;color:#e8e8ee;transform:matrix(0.8904,0.0006,0,1,0,0);">(Reben (Trauben))</div>
<svg style="left:927.5px;top:401.5px;" width="9" height="12" viewBox="0 0 9 12"><path d="M4.500 0.500C2.200 0.500 0.600 2.200 0.600 4.300C0.600 6.800 4.500 11.200 4.500 11.200C4.500 11.200 8.400 6.800 8.400 4.300C8.400 2.200 6.800 0.500 4.500 0.500Z" fill="#f2f2f2"/><circle cx="4.500" cy="4.200" r="1.500" fill="#3c3c3c"/></svg>
<div class="t" style="left:916.4px;top:416px;font-size:10.2px;line-height:10.2px;color:#f1f2f6;font-weight:700;transform:matrix(0.9880,0.0006,0,1,0,0);">0.34</div>
<div style="left:583px;top:458px;width:1315px;height:1px;background:#b0b0b0;"></div>
<div style="left:583px;top:518px;width:1315px;height:1px;background:#b0b0b0;"></div>
<div style="left:583px;top:578px;width:1315px;height:1px;background:#b0b0b0;"></div>
<div style="left:583px;top:638px;width:1315px;height:1px;background:#b0b0b0;"></div>
<div style="left:583px;top:698px;width:1315px;height:1px;background:#b0b0b0;"></div>
<div style="left:583px;top:745px;width:1315px;height:1px;background:#b0b0b0;"></div>
<div class="t" style="left:898.6px;top:461px;font-size:10.2px;line-height:10.2px;color:#f1f2f6;transform:matrix(0.9745,0.0006,0,1,0,0);">400</div>
<div class="t" style="left:918.9px;top:461px;font-size:10.2px;line-height:10.2px;color:#f1f2f6;transform:matrix(1.0441,0.0006,0,1,0,0);">l/ha</div>
<div class="t" style="left:902px;top:475px;font-size:10.2px;line-height:10.2px;color:#f1f2f6;transform:matrix(0.9310,0.0006,0,1,0,0);">4,5</div>
<div class="t" style="left:918.9px;top:475px;font-size:10.2px;line-height:10.2px;color:#f1f2f6;transform:matrix(1.0324,0.0006,0,1,0,0);">kg/ha</div>
<div class="t" style="left:896.6px;top:488px;font-size:10.2px;line-height:10.2px;color:#f1f2f6;transform:matrix(0.9375,0.0006,0,1,0,0);">0,32</div>
<div class="t" style="left:918.9px;top:488px;font-size:10.2px;line-height:10.2px;color:#f1f2f6;transform:matrix(1.0441,0.0006,0,1,0,0);">l/ha</div>
<div class="t" style="left:902.8px;top:501px;font-size:10.2px;line-height:10.2px;color:#f1f2f6;transform:matrix(0.8746,0.0006,0,1,0,0);">1,6</div>
<div class="t" style="left:918.9px;top:501px;font-size:10.2px;line-height:10.2px;color:#f1f2f6;transform:matrix(1.0441,0.0006,0,1,0,0);">l/ha</div>
<div class="t" style="left:898.6px;top:522px;font-size:10.2px;line-height:10.2px;color:#f1f2f6;transform:matrix(0.9745,0.0006,0,1,0,0);">400</div>
<div class="t" style="left:918.9px;top:522px;font-size:10.2px;line-height:10.2px;color:#f1f2f6;transform:matrix(1.0441,0.0006,0,1,0,0);">l/ha</div>
<div class="t" style="left:902px;top:535px;font-size:10.2px;line-height:10.2px;color:#f1f2f6;transform:matrix(0.9310,0.0006,0,1,0,0);">4,5</div>
<div class="t" style="left:918.9px;top:535px;font-size:10.2px;line-height:10.2px;color:#f1f2f6;transform:matrix(1.0324,0.0006,0,1,0,0);">kg/ha</div>
<div class="t" style="left:896.6px;top:548px;font-size:10.2px;line-height:10.2px;color:#f1f2f6;transform:matrix(0.9375,0.0006,0,1,0,0);">0,32</div>
<div class="t" style="left:918.9px;top:548px;font-size:10.2px;line-height:10.2px;color:#f1f2f6;transform:matrix(1.0441,0.0006,0,1,0,0);">l/ha</div>
<div class="t" style="left:902.8px;top:562px;font-size:10.2px;line-height:10.2px;color:#f1f2f6;transform:matrix(0.8746,0.0006,0,1,0,0);">1,6</div>
<div class="t" style="left:918.9px;top:562px;font-size:10.2px;line-height:10.2px;color:#f1f2f6;transform:matrix(1.0441,0.0006,0,1,0,0);">l/ha</div>
<div class="t" style="left:898.6px;top:582px;font-size:10.2px;line-height:10.2px;color:#f1f2f6;transform:matrix(0.9745,0.0006,0,1,0,0);">400</div>
<div class="t" style="left:918.9px;top:582px;font-size:10.2px;line-height:10.2px;color:#f1f2f6;transform:matrix(1.0441,0.0006,0,1,0,0);">l/ha</div>
<div class="t" style="left:902.8px;top:595px;font-size:10.2px;line-height:10.2px;color:#f1f2f6;transform:matrix(0.8746,0.0006,0,1,0,0);">1,6</div>
<div class="t" style="left:918.9px;top:595px;font-size:10.2px;line-height:10.2px;color:#f1f2f6;transform:matrix(1.0324,0.0006,0,1,0,0);">kg/ha</div>
<div class="t" style="left:896.6px;top:608px;font-size:10.2px;line-height:10.2px;color:#f1f2f6;transform:matrix(0.9375,0.0006,0,1,0,0);">0,32</div>
<div class="t" style="left:918.9px;top:608px;font-size:10.2px;line-height:10.2px;color:#f1f2f6;transform:matrix(1.0441,0.0006,0,1,0,0);">l/ha</div>
<div class="t" style="left:910px;top:622px;font-size:10.2px;line-height:10.2px;color:#f1f2f6;transform:matrix(0.9186,0.0006,0,1,0,0);">3</div>
<div class="t" style="left:918.9px;top:622px;font-size:10.2px;line-height:10.2px;color:#f1f2f6;transform:matrix(1.0324,0.0006,0,1,0,0);">kg/ha</div>
<div class="t" style="left:898.6px;top:642px;font-size:10.2px;line-height:10.2px;color:#f1f2f6;transform:matrix(0.9745,0.0006,0,1,0,0);">400</div>
<div class="t" style="left:918.9px;top:642px;font-size:10.2px;line-height:10.2px;color:#f1f2f6;transform:matrix(1.0441,0.0006,0,1,0,0);">l/ha</div>
<div class="t" style="left:902.8px;top:655px;font-size:10.2px;line-height:10.2px;color:#f1f2f6;transform:matrix(0.8746,0.0006,0,1,0,0);">1,6</div>
<div class="t" style="left:918.9px;top:655px;font-size:10.2px;line-height:10.2px;color:#f1f2f6;transform:matrix(1.0324,0.0006,0,1,0,0);">kg/ha</div>
<div class="t" style="left:896.6px;top:669px;font-size:10.2px;line-height:10.2px;color:#f1f2f6;transform:matrix(0.9375,0.0006,0,1,0,0);">0,32</div>
<div class="t" style="left:918.9px;top:669px;font-size:10.2px;line-height:10.2px;color:#f1f2f6;transform:matrix(1.0441,0.0006,0,1,0,0);">l/ha</div>
<div class="t" style="left:910px;top:682px;font-size:10.2px;line-height:10.2px;color:#f1f2f6;transform:matrix(0.9186,0.0006,0,1,0,0);">3</div>
<div class="t" style="left:918.9px;top:682px;font-size:10.2px;line-height:10.2px;color:#f1f2f6;transform:matrix(1.0324,0.0006,0,1,0,0);">kg/ha</div>
<div class="t" style="left:898.6px;top:702px;font-size:10.2px;line-height:10.2px;color:#f1f2f6;transform:matrix(0.9745,0.0006,0,1,0,0);">400</div>
<div class="t" style="left:918.9px;top:702px;font-size:10.2px;line-height:10.2px;color:#f1f2f6;transform:matrix(1.0441,0.0006,0,1,0,0);">l/ha</div>
<div class="t" style="left:902.8px;top:716px;font-size:10.2px;line-height:10.2px;color:#f1f2f6;transform:matrix(0.8746,0.0006,0,1,0,0);">1,2</div>
<div class="t" style="left:918.9px;top:716px;font-size:10.2px;line-height:10.2px;color:#f1f2f6;transform:matrix(1.0324,0.0006,0,1,0,0);">kg/ha</div>
<div class="t" style="left:902px;top:729px;font-size:10.2px;line-height:10.2px;color:#f1f2f6;transform:matrix(0.9310,0.0006,0,1,0,0);">0,8</div>
<div class="t" style="left:918.9px;top:729px;font-size:10.2px;line-height:10.2px;color:#f1f2f6;transform:matrix(1.0441,0.0006,0,1,0,0);">l/ha</div>
<div class="t" style="left:898.6px;top:749px;font-size:10.2px;line-height:10.2px;color:#f1f2f6;transform:matrix(0.9745,0.0006,0,1,0,0);">400</div>
<div class="t" style="left:918.9px;top:749px;font-size:10.2px;line-height:10.2px;color:#f1f2f6;transform:matrix(1.0441,0.0006,0,1,0,0);">l/ha</div>
<div class="t" style="left:902.8px;top:763px;font-size:10.2px;line-height:10.2px;color:#f1f2f6;transform:matrix(0.8746,0.0006,0,1,0,0);">1,2</div>
<div class="t" style="left:918.9px;top:763px;font-size:10.2px;line-height:10.2px;color:#f1f2f6;transform:matrix(1.0324,0.0006,0,1,0,0);">kg/ha</div>
<div class="t" style="left:709.4px;top:501px;font-size:10.2px;line-height:10.2px;color:#d9dbe8;transform:matrix(0.9672,0.0006,0,1,0,0);">Cuprozin progress</div>
<div class="t" style="left:709.4px;top:562px;font-size:10.2px;line-height:10.2px;color:#d9dbe8;transform:matrix(0.9672,0.0006,0,1,0,0);">Cuprozin progress</div>
<div style="left:585px;top:750px;width:30px;height:22.5px;overflow:hidden;"><div style="left:-585px;top:-750px;width:1918px;height:1030px;"><div style="left:587.5px;top:756px;width:24px;height:24px;background:#8c1517;border-radius:50%;"></div>
<div class="t" style="left:593.7px;top:764px;font-size:10px;line-height:10px;color:#f4dede;font-weight:700;transform:matrix(0.8689,0.0006,0,1,0,0);">PS</div>
</div></div>
<div class="t" style="left:625.9px;top:762px;font-size:10.2px;line-height:10.2px;color:#dcdfee;transform:matrix(0.9206,0.0006,0,1,0,0);">04.07.2022</div>
<div style="left:700.2px;top:749.6px;width:6.4px;height:6.4px;background:#1010c4;border-radius:50%;"></div>
<div class="t" style="left:708.9px;top:749px;font-size:10.2px;line-height:10.2px;color:#d4d7e6;transform:matrix(0.9737,0.0006,0,1,0,0);">Spritzbrühe</div>
<div style="left:700.2px;top:763px;width:6.4px;height:6.4px;background:#a81c1c;border-radius:50%;"></div>
<div class="t" style="left:708.9px;top:762px;font-size:10.2px;line-height:10.2px;color:#e4e6f2;transform:matrix(0.9407,0.0006,0,1,0,0);">Folpan 80 WDG</div>
<div style="left:1833.8px;top:754px;width:25.4px;height:17.2px;background:#dddddd;border-radius:5.5px;"></div>
<div class="t" style="left:1844.83px;top:758px;font-size:10px;line-height:10px;color:#222;transform:matrix(1.0000,0.0006,0,1,0,0);">-</div>
<div style="left:1863.3px;top:754px;width:24.8px;height:17.2px;background:#dddddd;border-radius:5.5px;"></div>
<div class="t" style="left:1872.78px;top:758px;font-size:10px;line-height:10px;color:#222;transform:matrix(1.0000,0.0006,0,1,0,0);">+</div>
<!-- sec_map -->
<svg style="left:1719px;top:148px;overflow:hidden;" width="179" height="604" viewBox="0 0 179 604"><defs>
<pattern id="vr1" width="2.600" height="8" patternUnits="userSpaceOnUse" patternTransform="rotate(4)"><rect width="2.600" height="8" fill="#33452f"/><rect x="0" width="0.900" height="8" fill="#8a967f"/></pattern>
<pattern id="vr2" width="2.800" height="8" patternUnits="userSpaceOnUse" patternTransform="rotate(-17)"><rect width="2.800" height="8" fill="#32462d"/><rect x="0" width="1" height="8" fill="#7c8a70"/></pattern>
<pattern id="vr3" width="2.800" height="8" patternUnits="userSpaceOnUse" patternTransform="rotate(-24)"><rect width="2.800" height="8" fill="#31462c"/><rect x="0" width="0.900" height="8" fill="#78876c"/></pattern>
<pattern id="yl" width="2.600" height="2.600" patternUnits="userSpaceOnUse" patternTransform="rotate(-20)"><rect width="2.600" height="2.600" fill="#8b8a5c"/><rect width="1" height="1" fill="#5f6a42"/></pattern>
<pattern id="tn" width="179" height="13" patternUnits="userSpaceOnUse" patternTransform="rotate(3)"><rect width="179" height="13" fill="#a79a85"/><rect y="6" width="179" height="0.700" fill="#90826e"/></pattern>
<linearGradient id="gl" x1="0" y1="0" x2="0" y2="1"><stop offset="0" stop-color="#3d6630"/><stop offset="0.300" stop-color="#4c763c"/><stop offset="0.700" stop-color="#446a36"/><stop offset="1" stop-color="#2d4829"/></linearGradient>
<clipPath id="mc"><rect width="179" height="604"/></clipPath>
<filter id="bl" color-interpolation-filters="sRGB" x="-5%" y="-5%" width="110%" height="110%"><feGaussianBlur stdDeviation="0.550"/></filter>
<filter id="nz" color-interpolation-filters="sRGB" x="0" y="0" width="100%" height="100%"><feTurbulence type="fractalNoise" baseFrequency="0.550" numOctaves="3" seed="11"/><feColorMatrix type="matrix" values="0.600 0.600 0.600 0 -0.400  0.600 0.600 0.600 0 -0.400  0.600 0.600 0.600 0 -0.400  0 0 0 0 1"/></filter>
<filter id="nz2" color-interpolation-filters="sRGB" x="0" y="0" width="100%" height="100%"><feTurbulence type="fractalNoise" baseFrequency="0.060" numOctaves="2" seed="5"/><feColorMatrix type="matrix" values="0.700 0.700 0.700 0 -0.550  0.700 0.700 0.700 0 -0.550  0.700 0.700 0.700 0 -0.550  0 0 0 0 1"/></filter>
</defs><g clip-path="url(#mc)"><g filter="url(#bl)"><rect width="179" height="170" fill="#57783f"/><path d="M0 0H48L42 122L0 124Z" fill="url(#gl)"/><path d="M50 16H179V60H58Z" fill="#5b7c43"/><path d="M62 66H179V128H62Z" fill="#4e7240"/><path d="M0 0H60L58 8L30 14L0 15Z" fill="#27431f"/><path d="M62 11C70 6 92 7 100 13C104 20 98 27 86 26C78 30 68 27 64 22Z" fill="#1c3322"/><path d="M112 12C122 7 140 9 150 14C160 12 172 13 179 15V32C170 30 160 33 150 27C140 31 126 30 118 24C112 20 110 16 112 12Z" fill="#223b22"/><path d="M70 0H145L140 5H75Z" fill="#2d4a24"/><path d="M0 16.500L48 11.500L66 8L120 6.500L179 4.500" fill="none" stroke="#a7a68f" stroke-width="5"/><path d="M139 5L179 1V8L139 9Z" fill="#aaa893"/><path d="M48 13L45 60L41 120" fill="none" stroke="#9d9474" stroke-width="2.600"/><rect x="140" y="54" width="39" height="14" fill="#a3a393"/><rect x="144" y="31" width="35" height="24" fill="#d4d4c8"/><rect x="147" y="33.500" width="32" height="21" fill="#6d6d69"/><rect x="147" y="31.500" width="32" height="2.500" fill="#3c3c3a"/><path d="M179 66L120 62L64 60Q55 60 55 68V118Q55 127 66 127.500L120 131L179 134.500" fill="none" stroke="#9c9b87" stroke-width="4"/><path d="M62 75H161M70 80H179M66 85H173M66 91H161M66 97H173M62 102H167M70 107H161M66 112H179M66 79V112M84 88V112M100 76V108M108 85V112M122 82V104M128 85V104M158 85V104M166 79V108M171 79V112M176 79V104" fill="none" stroke="#cfd8c4" stroke-width="1" opacity="0.85"/><path d="M64 76H106M100 113H146M82 41H110M96 148H142" stroke="#e3e8da" stroke-width="1.600" fill="none"/><rect x="81" y="47" width="5.500" height="8" fill="#f1f1ec"/><rect x="86.5" y="47" width="2" height="8" fill="#1c1c1c"/><rect x="114" y="133" width="5.500" height="8" fill="#f1f1ec"/><rect x="119.5" y="133" width="2" height="8" fill="#1c1c1c"/><rect x="155" y="136" width="5.500" height="8" fill="#f1f1ec"/><rect x="160.5" y="136" width="2" height="8" fill="#1c1c1c"/><rect x="89" y="66" width="2.600" height="5" fill="#d5d3c4"/><rect x="90" y="43" width="1.800" height="6" fill="#d5d3c4"/><rect x="93.5" y="66" width="2.600" height="5" fill="#d5d3c4"/><rect x="94.5" y="43" width="1.800" height="6" fill="#d5d3c4"/><rect x="98" y="66" width="2.600" height="5" fill="#d5d3c4"/><rect x="99" y="43" width="1.800" height="6" fill="#d5d3c4"/><rect x="103" y="118" width="2.800" height="6" fill="#c9c2b2"/><rect x="107.5" y="118" width="2.800" height="6" fill="#c9c2b2"/><rect x="112" y="118" width="2.800" height="6" fill="#c9c2b2"/><rect x="123" y="118" width="2.800" height="6" fill="#c9c2b2"/><rect x="127.5" y="118" width="2.800" height="6" fill="#c9c2b2"/><rect x="132" y="118" width="2.800" height="6" fill="#c9c2b2"/><rect x="145" y="118" width="2.800" height="6" fill="#c9c2b2"/><rect x="149.5" y="118" width="2.800" height="6" fill="#c9c2b2"/><rect x="154" y="118" width="2.800" height="6" fill="#c9c2b2"/><path d="M0 124L40 119L100 122L60 132L0 139Z" fill="#1f3322" opacity="0.85"/><path d="M86 40L124 33L98 37ZM70 78L110 70L84 76Z" fill="#1d2d1d" stroke="#1d2d1d" stroke-width="1.200"/><path d="M21 141.500L68 146.500L30 149.500L22 146Z" fill="#e8ece6" opacity="0.950"/><path d="M0 141H12" stroke="#d6dccf" stroke-width="1.400"/><path d="M0 158.500L179 168V248L0 236Z" fill="url(#tn)"/><path d="M0 158.500L179 168" stroke="#3c5a30" stroke-width="1.500"/><path d="M0 236L179 248V604H0Z" fill="url(#vr1)"/><path d="M0 386C40 386 70 380 110 371C140 364 160 359 179 357V604H0Z" fill="url(#vr2)"/><path d="M0 478.600L24 473L47 467L90 454L123 439L146 427.400L166 414.200L179 394.400V604H0Z" fill="url(#vr3)"/><path d="M0 558L47 544.700L90 525L123 508.400L153 496.800L179 485.300V604H0Z" fill="url(#vr2)"/><path d="M0 236L179 248V360L0 386Z" fill="#223424" opacity="0.280"/><path d="M0 478L90 454L179 394V485L90 525L0 558Z" fill="#223424" opacity="0.150"/><path d="M0 481L24 476L41 545L0 557Z" fill="url(#yl)"/><path d="M179 490L150 500L124 512L136 560L150 598L179 590Z" fill="#35582c"/><path d="M179 492L160 500L152 520L165 545L179 548ZM150 575L179 562V600L158 600Z" fill="#223d22"/><path d="M124 520L148 510L160 560L140 568Z" fill="#456f3a"/><path d="M148 598L179 584V604H150Z" fill="#2a4526"/><rect x="158" y="542" width="10" height="5" fill="#dfe3dc"/><path d="M35 361L70 355L120 347L179 337" fill="none" stroke="#1a2a24" stroke-width="5" opacity="0.900"/><path d="M60 352L78 349L80 361L62 364Z" fill="#8c8c70"/><path d="M6 380L34 371L42 379L12 390ZM118 349L150 340L156 348L124 357Z" fill="#b9c4c0" opacity="0.700"/><path d="M0 237L179 249" fill="none" stroke="#d0ccb9" stroke-width="3.200"/><path d="M0 386.500L47 386C62 384 76 380 90 376L123 369.600L146 364L176.500 357.800Q181 360 179.500 372L179.200 394.400L166 414.200L146.200 427.400L123 439L90 454L47 467L24 473L0 478.600" fill="none" stroke="#b9b197" stroke-width="5.500" stroke-linejoin="round"/><path d="M0 558L47 544.700L90 525L123 508.400L153 496.800L179 485.300" fill="none" stroke="#b9b197" stroke-width="5.500" stroke-linejoin="round"/><path d="M83 462L97 524M24 480L41 545M40 552L56 604" fill="none" stroke="#8d8a6c" stroke-width="1.600"/><path d="M118 572L150 560M98 580L112 576M20 566L42 560M24 582L44 576M124 596L179 574" fill="none" stroke="#9c8f66" stroke-width="1.200"/><path d="M3 150L62 360M8 150L78 360M14 150L96 360M19 150L112 360M25 150L128 360M30 150L146 360M36 150L164 360M41 150L182 360M44 352L150 604M60 352L168 604M76 352L186 604M90 352L204 604M106 352L222 604M122 352L240 604M14 0L4 150M22 0L14 150M30 0L26 150M38 0L40 150M52 0L62 150M58 0L76 150M0 250L40 380M0 250L24 380" fill="none" stroke="#e8eedd" stroke-width="0.900" opacity="0.500"/></g><rect width="179" height="604" filter="url(#nz2)" style="mix-blend-mode:soft-light" opacity="0.400"/><rect width="179" height="604" filter="url(#nz)" style="mix-blend-mode:soft-light" opacity="0.350"/></g></svg>
<!-- sec_bottom -->
<div style="left:571px;top:796.5px;width:1337px;height:202px;background:#3c3c3c;border-radius:7px;"></div>
<div class="t" style="left:595.3px;top:805px;font-size:10.2px;line-height:10.2px;color:#f1f2f6;font-weight:700;transform:matrix(0.9346,0.0006,0,1,0,0);">Düngung</div>
<svg style="left:653px;top:803px;" width="16" height="12" viewBox="0 0 16 12"><path d="M2 9.600L7.800 3.800L13.600 9.600" fill="none" stroke="#f0f0f0" stroke-width="1.600"/></svg>
<div class="t" style="left:604.3px;top:837px;font-size:10.2px;line-height:10.2px;color:#f1f2f6;transform:matrix(0.9811,0.0006,0,1,0,0);">Zufuhr + Entzug</div>
<div style="left:700px;top:828px;width:145.3px;height:25.4px;background:#ffdc46;border-radius:5px;"></div>
<div class="t" style="left:717.4px;top:837px;font-size:10.2px;line-height:10.2px;color:#7a6c3e;transform:matrix(0.9738,0.0006,0,1,0,0);">Düngeplanungsrechnung</div>
<div style="left:595.2px;top:858.4px;width:1312.8px;height:25.6px;background:#696a6e;"></div>
<div class="t" style="left:602.6px;top:867px;font-size:10.2px;line-height:10.2px;color:#f4f5fa;font-weight:700;transform:matrix(0.9264,0.0006,0,1,0,0);">Düngebedarfsberechnung</div>
<div style="left:1843.9px;top:863.1px;width:59.2px;height:15.8px;background:#dddddd;"></div>
<div class="t" style="left:1864.25px;top:867px;font-size:10px;line-height:10px;color:#222;transform:matrix(0.8768,0.0006,0,1,0,0);">NEU</div>
<div class="t" style="left:603.3px;top:891px;font-size:10.2px;line-height:10.2px;color:#f1f2f6;transform:matrix(0.9112,0.0006,0,1,0,0);">18.12.25</div>
<div class="t" style="left:649.9px;top:891px;font-size:10.2px;line-height:10.2px;color:#f1f2f6;font-weight:700;transform:matrix(0.9521,0.0006,0,1,0,0);">kg/ha:</div>
<div class="t" style="left:682.6px;top:891px;font-size:10.2px;line-height:10.2px;color:#f1f2f6;font-weight:700;transform:matrix(0.9892,0.0006,0,1,0,0);">57</div>
<div class="t" style="left:696.8px;top:891px;font-size:10.2px;line-height:10.2px;color:#f1f2f6;transform:matrix(0.9412,0.0006,0,1,0,0);">N,</div>
<div class="t" style="left:710.6px;top:891px;font-size:10.2px;line-height:10.2px;color:#f1f2f6;font-weight:700;transform:matrix(0.9892,0.0006,0,1,0,0);">0</div>
<div class="t" style="left:719px;top:891px;font-size:10.2px;line-height:10.2px;color:#f1f2f6;transform:matrix(0.8902,0.0006,0,1,0,0);">P,</div>
<div class="t" style="left:730.8px;top:891px;font-size:10.2px;line-height:10.2px;color:#f1f2f6;font-weight:700;transform:matrix(1.0069,0.0006,0,1,0,0);">48</div>
<div class="t" style="left:745.2px;top:891px;font-size:10.2px;line-height:10.2px;color:#f1f2f6;transform:matrix(0.8000,0.0006,0,1,0,0);">K,</div>
<div class="t" style="left:756.8px;top:891px;font-size:10.2px;line-height:10.2px;color:#f1f2f6;font-weight:700;transform:matrix(1.0069,0.0006,0,1,0,0);">25</div>
<div class="t" style="left:771.2px;top:891px;font-size:10.2px;line-height:10.2px;color:#f1f2f6;transform:matrix(1.0298,0.0006,0,1,0,0);">Mg</div>
<div style="left:601.3px;top:906.6px;width:1300.7px;height:1px;background:#f0f0f0;"></div>
<div class="t" style="left:603.3px;top:916px;font-size:10.2px;line-height:10.2px;color:#f1f2f6;transform:matrix(0.9291,0.0006,0,1,0,0);">21.11.22</div>
<div class="t" style="left:649.9px;top:916px;font-size:10.2px;line-height:10.2px;color:#f1f2f6;font-weight:700;transform:matrix(0.9521,0.0006,0,1,0,0);">kg/ha:</div>
<div class="t" style="left:682.6px;top:916px;font-size:10.2px;line-height:10.2px;color:#f1f2f6;font-weight:700;transform:matrix(0.9892,0.0006,0,1,0,0);">57</div>
<div class="t" style="left:696.8px;top:916px;font-size:10.2px;line-height:10.2px;color:#f1f2f6;transform:matrix(0.9412,0.0006,0,1,0,0);">N,</div>
<div class="t" style="left:713.4px;top:916px;font-size:10.2px;line-height:10.2px;color:#f1f2f6;transform:matrix(0.8902,0.0006,0,1,0,0);">P,</div>
<div class="t" style="left:727.6px;top:916px;font-size:10.2px;line-height:10.2px;color:#f1f2f6;transform:matrix(0.8000,0.0006,0,1,0,0);">K,</div>
<div class="t" style="left:742.4px;top:916px;font-size:10.2px;line-height:10.2px;color:#f1f2f6;transform:matrix(1.0298,0.0006,0,1,0,0);">Mg</div>
<div style="left:601.3px;top:931.6px;width:1300.7px;height:1.2px;background:#f0f0f0;"></div>
<div style="left:596px;top:935.4px;width:1311.5px;height:25px;background:#5e5e5e;border:1px solid #e8e8e8;box-sizing:border-box;"></div>
<div style="left:601.3px;top:937.2px;width:1305px;height:20.2px;background:linear-gradient(90deg,#ffa500 0px,#f4a314 30px,#c39a5c 110px,#8e8674 190px,#636363 250px,#606060 1305px);"></div>
<div style="left:601.3px;top:957.6px;width:1300.7px;height:1px;background:#f0f0f0;"></div>
<div style="left:596px;top:960.6px;width:1311.5px;height:1px;background:#dcdcdc;"></div>
<div class="t" style="left:603.3px;top:941px;font-size:10.2px;line-height:10.2px;color:#f6f0e0;transform:matrix(0.9291,0.0006,0,1,0,0);">21.11.22</div>
<div class="t" style="left:649.9px;top:941px;font-size:10.2px;line-height:10.2px;color:#f4efe4;font-weight:700;transform:matrix(0.9521,0.0006,0,1,0,0);">kg/ha:</div>
<div class="t" style="left:682.6px;top:941px;font-size:10.2px;line-height:10.2px;color:#f4efe4;font-weight:700;transform:matrix(0.9892,0.0006,0,1,0,0);">70</div>
<div class="t" style="left:696.8px;top:941px;font-size:10.2px;line-height:10.2px;color:#f4efe4;transform:matrix(0.9412,0.0006,0,1,0,0);">N,</div>
<div class="t" style="left:713.4px;top:941px;font-size:10.2px;line-height:10.2px;color:#f4efe4;transform:matrix(0.8902,0.0006,0,1,0,0);">P,</div>
<div class="t" style="left:727.6px;top:941px;font-size:10.2px;line-height:10.2px;color:#f4efe4;transform:matrix(0.8000,0.0006,0,1,0,0);">K,</div>
<div class="t" style="left:742.4px;top:941px;font-size:10.2px;line-height:10.2px;color:#f4efe4;transform:matrix(1.0298,0.0006,0,1,0,0);">Mg</div>
<div style="left:1846.5px;top:888.7px;width:12.2px;height:16.7px;background:#fff;border:1.5px solid #3a32c8;box-sizing:border-box;"></div>
<div class="t" style="left:1848.28px;top:892px;font-size:12px;line-height:12px;color:#000;font-weight:700;transform:matrix(1.0000,0.0006,0,1,0,0);">N</div>
<div style="left:1866.8px;top:888.7px;width:11.6px;height:16.7px;background:#e4e4e4;border:1.5px solid #2e9a5a;box-sizing:border-box;"></div>
<div class="t" style="left:1868.43px;top:891px;font-size:6px;line-height:6px;color:#222;font-weight:700;transform:matrix(1.0000,0.0006,0,1,0,0);">PK</div>
<div class="t" style="left:1868.43px;top:897px;font-size:6px;line-height:6px;color:#444;transform:matrix(1.0000,0.0006,0,1,0,0);">Mg</div>
<svg style="left:1885.8px;top:889.4px;" width="14" height="14" viewBox="0 0 14 14"><path d="M1.300 1.300L12.500 12.500M12.500 1.300L1.300 12.500" stroke="#f4f4f4" stroke-width="1.500" fill="none"/></svg>
<svg style="left:1885.8px;top:914.8px;" width="14" height="14" viewBox="0 0 14 14"><path d="M1.300 1.300L12.500 12.500M12.500 1.300L1.300 12.500" stroke="#f4f4f4" stroke-width="1.500" fill="none"/></svg>
<svg style="left:1885.8px;top:939.7px;" width="14" height="14" viewBox="0 0 14 14"><path d="M1.300 1.300L12.500 12.500M12.500 1.300L1.300 12.500" stroke="#f4f4f4" stroke-width="1.500" fill="none"/></svg>
<div class="t" style="left:595.3px;top:980px;font-size:10.2px;line-height:10.2px;color:#f1f2f6;font-weight:700;transform:matrix(0.9725,0.0006,0,1,0,0);">Notizen/Dokumente</div>
<svg style="left:703px;top:979px;" width="16" height="12" viewBox="0 0 16 12"><path d="M2 2.600L8.200 8.800L14.400 2.600" fill="none" stroke="#f0f0f0" stroke-width="1.600"/></svg>
<!-- sec_dialog -->
<div style="left:298px;top:142px;width:486px;height:606.5px;background:#4b4b4b;border-radius:9px 9px 8px 8px;box-shadow:0 1px 0 0 #050505,0 4px 18px 5px rgba(0,0,0,.24);"></div>
<div style="left:299px;top:143px;width:484px;height:604.5px;background:#3c3c3c;border-radius:8px 8px 7px 7px;"></div>
<div style="left:299px;top:143px;width:484px;height:29.8px;background:#f3f1ef;border-radius:8px 8px 0 0;"></div>
<svg style="left:307px;top:149px;" width="16" height="16" viewBox="0 0 16 16"><circle cx="8" cy="8" r="7.700" fill="#fff"/>
<g transform="translate(2.900,1.700) scale(0.270)" fill="none" stroke="#3aa535" stroke-width="3.400" stroke-linecap="round" stroke-linejoin="round">
<path d="M1.500 22.500H36.500"/><path d="M7.500 26.500V42.500H22L29.500 35V26.500"/><path d="M22 42.500V35H29.500"/>
<path d="M19.500 30V17"/><path d="M19.500 17C15 10 19 3.500 31 3C32.500 11 28 17.500 19.500 17Z"/><path d="M17.500 14.500L7 3.500"/>
<path d="M6 6.500L10 6.800M9 9.500L13 9.800"/></g></svg>
<div class="t" style="left:329.3px;top:151px;font-size:13px;line-height:13px;color:#1a1a1a;transform:matrix(0.9096,0.0006,0,1,0,0);">Schlag individuell rechnen</div>
<svg style="left:660px;top:149px;" width="110" height="16" viewBox="0 0 110 16"><g fill="none" stroke="#161616" stroke-width="1.100">
<path d="M3.300 8.400H13.700"/><rect x="48.800" y="3.400" width="9.600" height="9.600" rx="1.300"/>
<path d="M94.800 3.200L105 13.400M105 3.200L94.800 13.400"/></g></svg>
<div style="left:299px;top:460.8px;width:484px;height:248px;background:#8a7c42;"></div>
<div class="t" style="left:314.3px;top:178px;font-size:13px;line-height:13px;color:#f1f2f6;transform:matrix(0.8572,0.0006,0,1,0,0);">Schlag</div>
<div class="t" style="left:314.3px;top:222px;font-size:13px;line-height:13px;color:#f1f2f6;transform:matrix(0.9103,0.0006,0,1,0,0);">Anbau</div>
<div class="t" style="left:314.3px;top:274px;font-size:13px;line-height:13px;color:#f1f2f6;transform:matrix(0.8807,0.0006,0,1,0,0);">Ertrag</div>
<div class="t" style="left:314.3px;top:298px;font-size:13px;line-height:13px;color:#f1f2f6;transform:matrix(0.9423,0.0006,0,1,0,0);">Vorfrucht</div>
<div class="t" style="left:314.3px;top:360px;font-size:13px;line-height:13px;color:#f1f2f6;transform:matrix(0.9554,0.0006,0,1,0,0);">Nmin</div>
<div class="t" style="left:314.3px;top:386px;font-size:13px;line-height:13px;color:#f1f2f6;transform:matrix(0.9284,0.0006,0,1,0,0);">Düngung</div>
<div class="t" style="left:314.3px;top:420px;font-size:13px;line-height:13px;color:#f1f2f6;transform:matrix(0.8992,0.0006,0,1,0,0);">Wasserschutzgebiet</div>
<div class="t" style="left:314.3px;top:488px;font-size:13px;line-height:13px;color:#f1f2f6;transform:matrix(0.9221,0.0006,0,1,0,0);">Beprobungsdatum</div>
<div class="t" style="left:314.3px;top:544px;font-size:13px;line-height:13px;color:#f1f2f6;transform:matrix(0.9215,0.0006,0,1,0,0);">Werteart</div>
<div class="t" style="left:314.3px;top:610px;font-size:13px;line-height:13px;color:#f1f2f6;transform:matrix(0.9496,0.0006,0,1,0,0);">ph-Wert</div>
<div class="t" style="left:314.3px;top:403px;font-size:10.2px;line-height:10.2px;color:#f1f2f6;transform:matrix(0.9608,0.0006,0,1,0,0);">(organisch)</div>
<div class="t" style="left:314.3px;top:466px;font-size:13px;line-height:13px;color:#f6f4ea;font-weight:700;transform:matrix(0.8738,0.0006,0,1,0,0);">Ergänzende Angaben zur Grundnährstoffberechnung</div>
<div class="t" style="left:424.9px;top:178px;font-size:13px;line-height:13px;color:#f1f2f6;font-weight:700;transform:matrix(0.8980,0.0006,0,1,0,0);">710 Itzingerweg Becker Bender</div>
<div class="t" style="left:722.5px;top:178px;font-size:13px;line-height:13px;color:#f1f2f6;font-weight:700;transform:matrix(0.9057,0.0006,0,1,0,0);">0.68</div>
<div class="t" style="left:749.3px;top:178px;font-size:13px;line-height:13px;color:#f1f2f6;transform:matrix(0.8762,0.0006,0,1,0,0);">ha</div>
<div class="t" style="left:424.9px;top:200px;font-size:13px;line-height:13px;color:#f1f2f6;transform:matrix(0.9010,0.0006,0,1,0,0);">Gemarkung</div>
<div class="t" style="left:506.9px;top:200px;font-size:13px;line-height:13px;color:#141414;transform:matrix(0.8660,0.0006,0,1,0,0);">870</div>
<div class="t" style="left:546.5px;top:200px;font-size:13px;line-height:13px;color:#f1f2f6;font-weight:700;transform:matrix(0.8788,0.0006,0,1,0,0);">Neckarwestheim</div>
<div class="t" style="left:640.8px;top:200px;font-size:13px;line-height:13px;color:#f1f2f6;transform:matrix(0.9256,0.0006,0,1,0,0);">(Heilbronn)</div>
<div style="left:423.8px;top:219.5px;width:338.5px;height:21.1px;background:#3c3c3c;border-radius:7px;border:1px solid #8a8a8a;box-sizing:border-box;"></div>
<div class="t" style="left:433.9px;top:224px;font-size:13px;line-height:13px;color:#f1f2f6;transform:matrix(0.8672,0.0006,0,1,0,0);">Reben</div>
<svg style="left:743.1px;top:225.6px;" width="10" height="8" viewBox="0 0 10 8"><path d="M0.700 0.900H9.300L5 7.200Z" fill="#eaeaf6"/></svg>
<div style="left:423.8px;top:245.4px;width:338.5px;height:21.4px;background:#3c3c3c;border-radius:7px;border:1px solid #8a8a8a;box-sizing:border-box;"></div>
<div class="t" style="left:433.9px;top:250px;font-size:13px;line-height:13px;color:#f1f2f6;transform:matrix(0.9002,0.0006,0,1,0,0);">Reben, jede 2. Gasse oder ganzflächig begrünt</div>
<svg style="left:743.1px;top:251.6px;" width="10" height="8" viewBox="0 0 10 8"><path d="M0.700 0.900H9.300L5 7.200Z" fill="#eaeaf6"/></svg>
<div style="left:676.8px;top:271.3px;width:50px;height:19.4px;background:#3c3c3c;border-radius:5.5px;border:1px solid #dcdcdc;box-sizing:border-box;"></div>
<div class="t" style="left:692.75px;top:274px;font-size:13px;line-height:13px;color:#f1f2f6;transform:matrix(0.8706,0.0006,0,1,0,0);">100</div>
<div class="t" style="left:732px;top:274px;font-size:13px;line-height:13px;color:#f1f2f6;transform:matrix(0.9796,0.0006,0,1,0,0);">dt/ha</div>
<div style="left:423.8px;top:295.1px;width:338.5px;height:21.3px;background:#3c3c3c;border-radius:7px;border:1px solid #8a8a8a;box-sizing:border-box;"></div>
<svg style="left:743.1px;top:301.4px;" width="10" height="8" viewBox="0 0 10 8"><path d="M0.700 0.900H9.300L5 7.200Z" fill="#eaeaf6"/></svg>
<div style="left:424.8px;top:322px;width:14px;height:13px;background:#3c3c3c;border:1px solid #ececec;box-sizing:border-box;"></div>
<div class="t" style="left:443.5px;top:322px;font-size:13px;line-height:13px;color:#f1f2f6;transform:matrix(0.9188,0.0006,0,1,0,0);">Starke Wüchsigkeit / Umbruch langj. Begrünung</div>
<div style="left:424.8px;top:339.2px;width:14px;height:13px;background:#3c3c3c;border:1px solid #ececec;box-sizing:border-box;"></div>
<div class="t" style="left:443.5px;top:339px;font-size:13px;line-height:13px;color:#f1f2f6;transform:matrix(0.9317,0.0006,0,1,0,0);">Akuter N-Mangel oder Humusgehalt &gt; 1,5%</div>
<div style="left:423.8px;top:357.6px;width:118.6px;height:21.3px;background:#3c3c3c;border-radius:7px;border:1px solid #8a8a8a;box-sizing:border-box;"></div>
<div class="t" style="left:433.9px;top:361px;font-size:13px;line-height:13px;color:#f1f2f6;transform:matrix(0.9024,0.0006,0,1,0,0);">eigene Analyse</div>
<svg style="left:523.1px;top:363.7px;" width="10" height="8" viewBox="0 0 10 8"><path d="M0.700 0.900H9.300L5 7.200Z" fill="#eaeaf6"/></svg>
<div class="t" style="left:547.7px;top:360px;font-size:13px;line-height:13px;color:#f1f2f6;transform:matrix(0.9393,0.0006,0,1,0,0);">0 - 30</div>
<div style="left:585.4px;top:357.8px;width:30.2px;height:20.7px;background:#3c3c3c;border-radius:5.5px;border:1px solid #c8c8c8;box-sizing:border-box;"></div>
<div class="t" style="left:588.4px;top:361px;font-size:13px;line-height:13px;color:#f1f2f6;transform:matrix(0.8870,0.0006,0,1,0,0);">8</div>
<div style="left:617px;top:358px;width:29.2px;height:20px;overflow:hidden;"><div style="left:-617px;top:-358px;width:1918px;height:1030px;"><div class="t" style="left:619.1px;top:360px;font-size:13px;line-height:13px;color:#f1f2f6;transform:matrix(0.9137,0.0006,0,1,0,0);">30 - 60</div>
</div></div>
<div class="t" style="left:648.6px;top:360px;font-size:13px;line-height:13px;color:#f1f2f6;transform:matrix(0.9513,0.0006,0,1,0,0);">kg/ha</div>
<div style="left:423.8px;top:382.9px;width:313.6px;height:30.9px;background:#3c3c3c;border:1px solid #a6a6a6;box-sizing:border-box;"></div>
<div style="left:742.1px;top:387.5px;width:19.3px;height:25.2px;background:#e6e6e6;"></div>
<div class="t" style="left:747.9px;top:395px;font-size:13px;line-height:13px;color:#000;font-weight:700;transform:matrix(1.0000,0.0006,0,1,0,0);">+</div>
<div style="left:423.8px;top:418.4px;width:338.5px;height:21.3px;background:#3c3c3c;border-radius:7px;border:1px solid #8a8a8a;box-sizing:border-box;"></div>
<div class="t" style="left:433.9px;top:424px;font-size:13px;line-height:13px;color:#f1f2f6;transform:matrix(0.9283,0.0006,0,1,0,0);">Nein</div>
<svg style="left:743.1px;top:424.6px;" width="10" height="8" viewBox="0 0 10 8"><path d="M0.700 0.900H9.300L5 7.200Z" fill="#eaeaf6"/></svg>
<div style="left:424.8px;top:445.4px;width:14px;height:13px;background:#3c3c3c;border:1px solid #ececec;box-sizing:border-box;"></div>
<div class="t" style="left:443.5px;top:445px;font-size:13px;line-height:13px;color:#f1f2f6;transform:matrix(0.9349,0.0006,0,1,0,0);">Nitratsanierungsgebiet</div>
<div style="left:417.6px;top:485.3px;width:344.8px;height:25.3px;background:#3c3c3c;border-radius:6.5px;border:1px solid #e8e8e8;box-sizing:border-box;"></div>
<div style="left:420.9px;top:489.2px;width:311.8px;height:17.9px;background:#6a6a6e;border-radius:3px;border:1px solid #f0f0f0;box-sizing:border-box;"></div>
<div class="t" style="left:423.5px;top:491px;font-size:13px;line-height:13px;color:#e9edff;transform:matrix(0.8730,0.0006,0,1,0,0);">23.04.2020</div>
<div style="left:735.9px;top:489.5px;width:19.6px;height:17.6px;background:#6c6c6c;border:1px solid #d6d6d6;box-sizing:border-box;"></div>
<div style="left:736.6px;top:490.2px;width:18.2px;height:3.8px;background:#ffdc46;"></div>
<div style="left:744.8px;top:490.6px;width:1.9px;height:1.9px;background:#222;border-radius:50%;"></div>
<div class="t" style="left:740.3px;top:497px;font-size:9.5px;line-height:9.5px;color:#e4e4e4;transform:matrix(1.0242,0.0006,0,1,0,0);">15</div>
<div style="left:418.4px;top:515.9px;width:344px;height:20.5px;background:#3c3c3c;border-radius:7px;border:1px solid #4a4536;box-sizing:border-box;"></div>
<div class="t" style="left:427.4px;top:520px;font-size:13px;line-height:13px;color:#f1f2f6;transform:matrix(0.9069,0.0006,0,1,0,0);">sandiger bis schluffiger Lehm, sL - uL</div>
<svg style="left:743.1px;top:521.6px;" width="10" height="8" viewBox="0 0 10 8"><path d="M0.700 0.900H9.300L5 7.200Z" fill="#eaeaf6"/></svg>
<div style="left:418.4px;top:541.8px;width:344px;height:20.4px;background:#3c3c3c;border-radius:7px;border:1px solid #4a4536;box-sizing:border-box;"></div>
<div class="t" style="left:427.4px;top:546px;font-size:13px;line-height:13px;color:#f1f2f6;transform:matrix(0.9018,0.0006,0,1,0,0);">Analysewerte</div>
<svg style="left:743.1px;top:547.4px;" width="10" height="8" viewBox="0 0 10 8"><path d="M0.700 0.900H9.300L5 7.200Z" fill="#eaeaf6"/></svg>
<div class="t" style="left:470.14px;top:567px;font-size:13px;line-height:13px;color:#f6f4ea;font-weight:700;transform:matrix(0.8000,0.0006,0,1,0,0);">P</div>
<div class="t" style="left:586.6px;top:567px;font-size:13px;line-height:13px;color:#f6f4ea;font-weight:700;transform:matrix(0.8120,0.0006,0,1,0,0);">K</div>
<div class="t" style="left:697.7px;top:567px;font-size:13px;line-height:13px;color:#f6f4ea;font-weight:700;transform:matrix(0.9476,0.0006,0,1,0,0);">Mg</div>
<div style="left:421.3px;top:583.4px;width:105px;height:19px;background:#3c3c3c;border-radius:5.5px;border:1px solid #d6d6d6;box-sizing:border-box;"></div>
<div class="t" style="left:462.8px;top:586px;font-size:13px;line-height:13px;color:#f1f2f6;transform:matrix(0.8622,0.0006,0,1,0,0);">33,5</div>
<div style="left:536.8px;top:583.4px;width:107px;height:19px;background:#3c3c3c;border-radius:5.5px;border:1px solid #d6d6d6;box-sizing:border-box;"></div>
<div class="t" style="left:583.7px;top:586px;font-size:13px;line-height:13px;color:#f1f2f6;transform:matrix(0.9286,0.0006,0,1,0,0);">28</div>
<div style="left:654.3px;top:583.4px;width:105px;height:19px;background:#3c3c3c;border-radius:5.5px;border:1px solid #d6d6d6;box-sizing:border-box;"></div>
<div class="t" style="left:700.7px;top:586px;font-size:13px;line-height:13px;color:#f1f2f6;transform:matrix(0.8316,0.0006,0,1,0,0);">15</div>
<div style="left:421.3px;top:607.6px;width:39.2px;height:18.9px;background:#3c3c3c;border-radius:5.5px;border:1px solid #d6d6d6;box-sizing:border-box;"></div>
<div class="t" style="left:424.3px;top:609px;font-size:13px;line-height:13px;color:#f1f2f6;transform:matrix(0.8000,0.0006,0,1,0,0);">7,4</div>
<div style="left:570.9px;top:712.9px;width:100px;height:30px;background:#32cd32;border-radius:6px;"></div>
<div class="t" style="left:613px;top:722px;font-size:13px;line-height:13px;color:#fff;font-weight:700;transform:matrix(0.8205,0.0006,0,1,0,0);">OK</div>
<div style="left:678.9px;top:712.9px;width:100px;height:30px;background:#8b0000;border-radius:6px;"></div>
<div class="t" style="left:699.7px;top:722px;font-size:13px;line-height:13px;color:#fff;font-weight:700;transform:matrix(0.8598,0.0006,0,1,0,0);">Abbrechen</div>
<!-- sec_browser -->
<div style="left:1050px;top:115px;width:669px;height:851px;background:#fff;border-radius:9px;box-shadow:0 0 0 0.5px rgba(0,0,0,.25),0 3px 10px rgba(0,0,0,.35);"></div>
<div style="left:1050px;top:115px;width:669px;height:851px;overflow:hidden;border-radius:9px;"><div style="left:-1050px;top:-115px;width:1918px;height:1030px;"><div style="left:1050px;top:115px;width:669px;height:40px;background:#f2f2f0;"></div>
<div style="left:1056px;top:120px;width:27.8px;height:28px;background:#fff;border-radius:9px;"></div>
<svg style="left:1064px;top:128px;" width="12" height="12" viewBox="0 0 12 12"><path d="M2.400 4.200L6 7.800L9.600 4.200" fill="none" stroke="#1f1f1f" stroke-width="1.500"/></svg>
<div style="left:1090px;top:120px;width:231.7px;height:36px;background:#fff;border-radius:9px 9px 0 0;"></div>
<svg style="left:1082px;top:146px;" width="8" height="8" viewBox="0 0 8 8"><path d="M8 0V8H0A8 8 0 0 0 8 0Z" fill="#fff"/></svg>
<svg style="left:1321.7px;top:146px;" width="8" height="8" viewBox="0 0 8 8"><path d="M0 0V8H8A8 8 0 0 1 0 0Z" fill="#fff"/></svg>
<svg style="left:1098.5px;top:127px;" width="15" height="15" viewBox="0 0 15 15"><circle cx="7.500" cy="7.500" r="6.900" fill="#5f6368"/>
<path d="M3.200 3.400C4.500 3.300 5.500 4.200 5.300 5.300C5.100 6.300 3.600 6.200 3.700 7.400C3.800 8.600 5.400 8.300 5.700 9.600C5.900 10.700 5.200 11.200 5.600 12.400L4.500 12.200L2.300 9.500L1.700 6.300Z" fill="#fff"/>
<path d="M9.300 1.500C9.200 2.800 10.500 3.200 10.400 4.500C10.300 5.700 8.700 5.500 8.400 6.700C8.100 7.900 9.500 8.600 10.700 8.500C11.600 8.400 12.200 9.200 13.200 9L13.800 6.500L12.800 3.600L11 2Z" fill="#fff"/></svg>
<div style="left:1120px;top:124px;width:170px;height:22px;overflow:hidden;"><div style="left:-1120px;top:-124px;width:1918px;height:1030px;"><div class="t" style="left:1122.3px;top:129px;font-size:12px;line-height:12px;color:#1f1f1f;transform:matrix(0.9495,0.0006,0,1,0,0);">NBed_710_Itzingerweg Becker Bender</div>
</div></div>
<div style="left:1276px;top:124px;width:14px;height:22px;background:linear-gradient(90deg,rgba(255,255,255,0),#fff);"></div>
<svg style="left:1299px;top:128px;" width="13" height="13" viewBox="0 0 13 13"><path d="M2 2L11 11M11 2L2 11" stroke="#1f1f1f" stroke-width="1.500" fill="none"/></svg>
<svg style="left:1335px;top:128px;" width="13" height="13" viewBox="0 0 13 13"><path d="M6.300 1.300V11.700M1.100 6.500H11.500" stroke="#444" stroke-width="1.400" fill="none"/></svg>
<svg style="left:1595px;top:126px;" width="120" height="16" viewBox="0 0 120 16"><g fill="none" stroke="#8a8a8a" stroke-width="1">
<path d="M3.300 7.500H13.500"/><rect x="49.500" y="3.300" width="9.800" height="9.800" rx="1"/>
<path d="M96 3L106.200 13.200M106.200 3L96 13.200"/></g></svg>
<div style="left:1050px;top:154.5px;width:669px;height:80px;background:#fff;border-radius:9px 9px 0 0;"></div>
<div style="left:1050px;top:234px;width:669px;height:0.8px;background:#dcdcdc;"></div>
<svg style="left:1062px;top:168px;" width="20" height="18" viewBox="0 0 20 18"><path d="M17.500 9H3.200M9.300 2.600L2.900 9L9.300 15.400" fill="none" stroke="#b4b4b4" stroke-width="1.400"/></svg>
<svg style="left:1098px;top:168px;" width="20" height="18" viewBox="0 0 20 18"><path d="M2.500 9H16.800M10.700 2.600L17.100 9L10.700 15.400" fill="none" stroke="#b4b4b4" stroke-width="1.400"/></svg>
<svg style="left:1134px;top:167px;" width="20" height="20" viewBox="0 0 20 20"><g fill="none" stroke="#3a3a3a" stroke-width="1.500">
<path d="M3.700 11.600A6.300 6.300 0 0 1 14.800 6.300"/><path d="M16.300 8.600A6.300 6.300 0 0 1 5.200 13.900"/></g>
<path d="M12.600 6.600H16.400V2.800" fill="none" stroke="#3a3a3a" stroke-width="1.500"/>
<path d="M7.400 13.600H3.600V17.400" fill="none" stroke="#3a3a3a" stroke-width="1.500"/></svg>
<div style="left:1170px;top:160px;width:271px;height:33.8px;background:#efedef;border-radius:17px;"></div>
<div style="left:1174.7px;top:165px;width:60.4px;height:23.8px;background:#fff;border-radius:12px;"></div>
<svg style="left:1179.5px;top:170.5px;" width="14" height="14" viewBox="0 0 14 14"><circle cx="7" cy="7" r="5.800" fill="none" stroke="#333" stroke-width="1.200"/><path d="M7 6.300V10" stroke="#333" stroke-width="1.300"/><circle cx="7" cy="4.300" r="0.800" fill="#333"/></svg>
<div class="t" style="left:1199.3px;top:171px;font-size:12px;line-height:12px;color:#1f1f1f;font-weight:700;transform:matrix(0.9407,0.0006,0,1,0,0);">Datei</div>
<div class="t" style="left:1243.8px;top:170px;font-size:13.5px;line-height:13.5px;color:#1f1f1f;transform:matrix(1.0157,0.0006,0,1,0,0);">C:/Users/steph/D...</div>
<svg style="left:1376px;top:168.5px;" width="18" height="18" viewBox="0 0 18 18"><circle cx="7.300" cy="7.300" r="4.700" fill="none" stroke="#474747" stroke-width="1.400"/><path d="M10.800 10.800L15.200 15.200" stroke="#474747" stroke-width="1.600"/><path d="M5.300 7.300H9.300" stroke="#474747" stroke-width="1.200"/></svg>
<svg style="left:1407.5px;top:167.5px;" width="19" height="19" viewBox="0 0 19 19"><path d="M9.500 2.200L11.700 7L16.900 7.600L13.100 11.200L14.100 16.400L9.500 13.800L4.900 16.400L5.900 11.200L2.100 7.600L7.300 7Z" fill="none" stroke="#474747" stroke-width="1.350" stroke-linejoin="round"/></svg>
<div style="left:1458.8px;top:168.8px;width:16px;height:16px;background:#f7e014;border-radius:3.5px;"></div>
<svg style="left:1458.8px;top:168.8px;" width="16" height="16" viewBox="0 0 16 16"><g fill="none" stroke="#6a5a10" stroke-width="1"><path d="M3.300 11A5 5 0 1 1 12.700 9"/><path d="M5.500 10.300A2.800 2.800 0 1 1 10.600 8.800"/></g><circle cx="11.400" cy="11.600" r="2.300" fill="#e0141e"/></svg>
<svg style="left:1494.5px;top:168px;" width="16" height="18" viewBox="0 0 16 18"><path d="M8 0.800L14.800 3.200V8.500C14.800 12.700 11.800 15.700 8 17.200C4.200 15.700 1.200 12.700 1.200 8.500V3.200Z" fill="#1a73e8"/><rect x="5" y="7.600" width="6" height="4.800" rx="0.800" fill="none" stroke="#fff" stroke-width="1"/><path d="M6.200 7.600V6.200A1.800 1.800 0 0 1 9.800 6.200V7.600" fill="none" stroke="#fff" stroke-width="1"/></svg>
<svg style="left:1529.5px;top:167.5px;" width="19" height="19" viewBox="0 0 19 19"><path d="M7.500 4.200A2 2 0 1 1 11.300 4.200H14.600V8A2 2 0 1 1 14.600 11.700V15.800H10.800A2 2 0 1 0 7.200 15.800H3.500V11.900A2 2 0 1 0 3.500 8V4.200Z" fill="none" stroke="#2a2a2a" stroke-width="1.400" stroke-linejoin="round"/></svg>
<div style="left:1564.9px;top:169px;width:1px;height:16px;background:#d8d8d8;"></div>
<svg style="left:1584px;top:168.3px;" width="17" height="17" viewBox="0 0 17 17"><rect x="0.800" y="0.800" width="15.400" height="15.400" rx="3.200" fill="#fff" stroke="#2a2a2a" stroke-width="1.300"/><rect x="7.400" y="2.600" width="7" height="11.800" rx="2" fill="#0b62f5"/></svg>
<div style="left:1618.3px;top:167px;width:20px;height:20px;background:#e2e2e2;border-radius:50%;"></div>
<svg style="left:1621.3px;top:170px;" width="14" height="14" viewBox="0 0 14 14"><circle cx="7" cy="4.900" r="2.500" fill="none" stroke="#1f1f1f" stroke-width="1.300"/><path d="M2.300 11.800C2.300 9.300 4.400 8.300 7 8.300C9.600 8.300 11.700 9.300 11.700 11.800C10.300 12.500 3.700 12.500 2.300 11.800Z" fill="none" stroke="#1f1f1f" stroke-width="1.300"/></svg>
<svg style="left:1655px;top:168px;" width="16" height="18" viewBox="0 0 16 18"><path d="M8 0.800L14.800 3.200V8.500C14.800 12.700 11.800 15.700 8 17.200C4.200 15.700 1.200 12.700 1.200 8.500V3.200Z" fill="#0a6cf5"/><path d="M4.800 8.600L7.100 10.900L11.300 6.400" fill="none" stroke="#fff" stroke-width="1.500"/></svg>
<div style="left:1695.5px;top:170.4px;width:2.7px;height:2.7px;background:#2a2a2a;border-radius:50%;"></div>
<div style="left:1695.5px;top:175.7px;width:2.7px;height:2.7px;background:#2a2a2a;border-radius:50%;"></div>
<div style="left:1695.5px;top:181px;width:2.7px;height:2.7px;background:#2a2a2a;border-radius:50%;"></div>
<svg style="left:1062.5px;top:207px;" width="15" height="14" viewBox="0 0 15 14"><g fill="none" stroke="#474747" stroke-width="1.300"><rect x="1" y="0.900" width="4.600" height="4.600"/><rect x="9" y="0.900" width="4.600" height="4.600"/><rect x="1" y="8.500" width="4.600" height="4.600"/><rect x="9" y="8.500" width="4.600" height="4.600"/></g></svg>
<div style="left:1092.6px;top:206px;width:1px;height:15.5px;background:#dadada;"></div>
<div style="left:1107.8px;top:205.7px;width:16.2px;height:16.2px;background:#0866ff;border-radius:50%;"></div>
<div class="t" style="left:1114.17px;top:209px;font-size:14.5px;line-height:14.5px;color:#fff;font-weight:700;transform:matrix(1.0000,0.0006,0,1,0,0);">f</div>
<div class="t" style="left:1130.2px;top:208px;font-size:12px;line-height:12px;color:#3c3c3c;transform:matrix(0.9518,0.0006,0,1,0,0);">Facebook</div>
<div style="left:1197.6px;top:208.6px;width:14.2px;height:10.6px;background:#f00;border-radius:2.8px;"></div>
<svg style="left:1197.6px;top:208.6px;" width="14.2" height="10.6" viewBox="0 0 14.2 10.6"><path d="M5.700 3L9.300 5.300L5.700 7.600Z" fill="#fff"/></svg>
<div class="t" style="left:1219px;top:208px;font-size:12px;line-height:12px;color:#3c3c3c;transform:matrix(0.9606,0.0006,0,1,0,0);">YouTube</div>
<div class="t" style="left:1284.89px;top:206px;font-size:13.5px;line-height:13.5px;color:#111;font-weight:700;transform:matrix(1.0000,0.0006,0,1,0,0);">a</div>
<svg style="left:1282px;top:216.5px;" width="14" height="5" viewBox="0 0 14 5"><path d="M0.800 0.800C4.500 3.600 9.200 3.600 12.800 1.200" fill="none" stroke="#f90" stroke-width="1.300"/></svg>
<div class="t" style="left:1303px;top:208px;font-size:12px;line-height:12px;color:#3c3c3c;transform:matrix(0.9750,0.0006,0,1,0,0);">Amazon.de</div>
<svg style="left:1378.8px;top:205.5px;" width="16.4" height="16.5" viewBox="0 0 16.4 16.5"><path d="M4.600 4.300C4.600 -0.500 11.800 -0.500 11.800 4.300" fill="none" stroke="#111" stroke-width="1.400"/><rect x="0.200" y="4" width="16" height="12.200" fill="#111"/><rect x="0.200" y="6" width="4" height="7.800" fill="#e53238"/><rect x="4.200" y="6" width="4" height="7.800" fill="#0064d2"/><rect x="8.200" y="6" width="4" height="7.800" fill="#f5af02"/><rect x="12.200" y="6" width="4" height="7.800" fill="#86b817"/></svg>
<div class="t" style="left:1401.3px;top:208px;font-size:12px;line-height:12px;color:#3c3c3c;transform:matrix(0.8955,0.0006,0,1,0,0);">eBay</div>
<div style="left:1442.8px;top:205.6px;width:16px;height:16px;background:linear-gradient(#fff 0,#fff 70%,#e8e8e8 100%);"></div>
<div class="t" style="left:1443.8px;top:212px;font-size:5.4px;line-height:5.4px;color:#e30613;font-weight:700;transform:matrix(0.9393,0.0006,0,1,0,0);">OTTO</div>
<div class="t" style="left:1465.2px;top:208px;font-size:12px;line-height:12px;color:#3c3c3c;transform:matrix(1.0450,0.0006,0,1,0,0);">Otto</div>
<div style="left:1505.6px;top:205.6px;width:16.2px;height:16.2px;background:#0c2477;border-radius:2.5px;"></div>
<div class="t" style="left:1508.16px;top:209px;font-size:11.5px;line-height:11.5px;color:#fff;font-weight:700;transform:matrix(1.0000,0.0006,0,1,0,0);">B</div>
<div style="left:1517.3px;top:215.6px;width:2px;height:2px;background:#3aa0ff;border-radius:50%;"></div>
<div class="t" style="left:1528.2px;top:208px;font-size:12px;line-height:12px;color:#3c3c3c;transform:matrix(0.9833,0.0006,0,1,0,0);">Booking.com</div>
<svg style="left:1676px;top:208px;" width="13" height="12" viewBox="0 0 13 12"><path d="M2 1.800L6 5.900L2 10M6.600 1.800L10.600 5.900L6.600 10" fill="none" stroke="#3a3a3a" stroke-width="1.300"/></svg>
<div style="left:1050px;top:234.8px;width:621px;height:56.2px;background:#3c3c3c;"></div>
<div style="left:1050px;top:290.8px;width:606px;height:3.2px;background:#1d1d1d;"></div>
<svg style="left:1074px;top:255px;" width="16" height="15" viewBox="0 0 16 15"><path d="M1 2.500H15M1 7.500H15M1 12.500H15" stroke="#f1f1f1" stroke-width="1.500"/></svg>
<div style="left:1122.9px;top:252.8px;width:23.9px;height:19.5px;background:#1f1f1f;"></div>
<div class="t" style="left:1131.03px;top:257px;font-size:12.5px;line-height:12.5px;color:#fff;font-weight:700;transform:matrix(1.0000,0.0006,0,1,0,0);">1</div>
<div class="t" style="left:1151.05px;top:257px;font-size:12.5px;line-height:12.5px;color:#fff;transform:matrix(1.0000,0.0006,0,1,0,0);">/</div>
<div class="t" style="left:1164.03px;top:257px;font-size:12.5px;line-height:12.5px;color:#fff;font-weight:700;transform:matrix(1.0000,0.0006,0,1,0,0);">1</div>
<div style="left:1196px;top:252.5px;width:1px;height:20px;background:#6b6b6b;"></div>
<div style="left:1211.5px;top:261.8px;width:10.7px;height:1.5px;background:#f1f1f1;"></div>
<div style="left:1236.8px;top:252.8px;width:44.6px;height:19.5px;background:#1f1f1f;"></div>
<div class="t" style="left:1246.8px;top:257px;font-size:12.5px;line-height:12.5px;color:#fff;font-weight:700;transform:matrix(0.9760,0.0006,0,1,0,0);">80%</div>
<svg style="left:1294px;top:255.5px;" width="14" height="14" viewBox="0 0 14 14"><path d="M7.200 0.500V13.900M0.500 7.200H13.900" stroke="#f1f1f1" stroke-width="1.500"/></svg>
<div style="left:1321.8px;top:252.5px;width:1px;height:20px;background:#6b6b6b;"></div>
<svg style="left:1344px;top:254px;" width="14" height="18" viewBox="0 0 14 18"><rect x="1.200" y="1" width="11.200" height="15.600" rx="1.500" fill="none" stroke="#f1f1f1" stroke-width="1.400"/><path d="M4.800 6.800L6.800 4.600L8.800 6.800M4.800 10.800L6.800 13L8.800 10.800" fill="none" stroke="#f1f1f1" stroke-width="1.100"/></svg>
<svg style="left:1373px;top:253px;" width="20" height="20" viewBox="0 0 20 20"><path d="M9.500 4.200A6.300 6.300 0 1 1 3.800 13" fill="none" stroke="#f1f1f1" stroke-width="1.400"/><path d="M12.200 1.200L9 4.300L12.200 7.200" fill="none" stroke="#f1f1f1" stroke-width="1.400"/><rect x="3" y="8.300" width="5" height="5" transform="rotate(45 5.500 10.800)" fill="none" stroke="#f1f1f1" stroke-width="1.300"/></svg>
<div style="left:1411px;top:252.5px;width:1px;height:20px;background:#6b6b6b;"></div>
<svg style="left:1425px;top:254px;" width="18" height="18" viewBox="0 0 18 18"><path d="M2 4.500C4 1.500 7.500 1.800 6.500 5.500C5.500 9 3.500 12 5.500 12.800C7.800 13.500 9 8 11.500 8.500C13.500 9 11.500 14.500 13 14.800C14.500 15 15.500 13 16 12" fill="none" stroke="#f1f1f1" stroke-width="1.400" stroke-linecap="round"/></svg>
<div style="left:1456px;top:252.5px;width:1px;height:20px;background:#6b6b6b;"></div>
<svg style="left:1471px;top:255px;" width="16" height="15" viewBox="0 0 16 15"><path d="M6 1.500L2 5.500L6 9.500M2.300 5.500H9.500A4 4 0 0 1 9.500 13.500H6" fill="none" stroke="#a2a2a2" stroke-width="1.300"/></svg>
<svg style="left:1502px;top:255px;" width="16" height="15" viewBox="0 0 16 15"><path d="M10 1.500L14 5.500L10 9.500M13.700 5.500H6.500A4 4 0 0 0 6.500 13.500H10" fill="none" stroke="#a2a2a2" stroke-width="1.300"/></svg>
<svg style="left:1558px;top:254px;" width="17" height="17" viewBox="0 0 17 17"><path d="M8.500 1V11M4.300 7.200L8.500 11.300L12.700 7.200M1.300 12V15.500H15.700V12" fill="none" stroke="#f1f1f1" stroke-width="1.500"/></svg>
<svg style="left:1594px;top:254.5px;" width="17" height="17" viewBox="0 0 17 17"><g fill="none" stroke="#f1f1f1" stroke-width="1.400"><path d="M4.300 5.200V1.500H12.700V5.200"/><path d="M4.300 12.300H1.300V5.400H15.700V12.300H12.700"/><rect x="4.300" y="9.400" width="8.400" height="6"/></g></svg>
<div style="left:1637px;top:256px;width:2.7px;height:2.7px;background:#f1f1f1;border-radius:50%;"></div>
<div style="left:1637px;top:261.3px;width:2.7px;height:2.7px;background:#f1f1f1;border-radius:50%;"></div>
<div style="left:1637px;top:266.6px;width:2.7px;height:2.7px;background:#f1f1f1;border-radius:50%;"></div>
<div style="left:1050px;top:294px;width:6px;height:672px;background:#2b2b2b;"></div>
<div style="left:1055px;top:294px;width:601px;height:658px;background:#fff;"></div>
<div class="t" style="left:1093.3px;top:327px;font-size:12.8px;line-height:12.8px;color:#000;font-weight:700;transform:matrix(1.0000,0.0006,0,1,0,0);-webkit-text-stroke:0.22px #000;">Düngung BW</div>
<div class="t" style="left:1093.4px;top:343px;font-size:7.47px;line-height:7.47px;color:#000;transform:matrix(1.0000,0.0006,0,1,0,0);-webkit-text-stroke:0.22px #000;">Ein Dienst des Ministeriums für Ernährung, Ländlichen Raum und Verbraucherschutz Baden-Württemberg</div>
<div class="t" style="left:1093.4px;top:360px;font-size:12.8px;line-height:12.8px;color:#000;transform:matrix(1.0000,0.0006,0,1,0,0);-webkit-text-stroke:0.22px #000;">N-Düngebedarfsermittlung</div>
<div class="t" style="left:1598.6px;top:326px;font-size:10.67px;line-height:10.67px;color:#000;transform:matrix(1.0000,0.0006,0,1,0,0);-webkit-text-stroke:0.22px #000;">18.12.2025</div>
<svg style="left:1577px;top:355px;" width="17" height="20" viewBox="0 0 17 20"><g fill="none" stroke="#3fa535" stroke-width="0.900" stroke-linecap="round" stroke-linejoin="round">
<path d="M0.700 9.800H16.300M3.400 11.600V18.700H9.600L13 15.300V11.600M9.600 18.700V15.300H13M8.700 13V7.200"/>
<path d="M8.700 7.200C6.700 4 8.500 1.200 13.800 1C14.400 4.500 12.400 7.400 8.700 7.200Z"/><path d="M8 6.200L3.200 1.300"/></g></svg>
<div class="t" style="left:1597.6px;top:358px;font-size:12.6px;line-height:12.6px;color:#58595b;font-weight:700;transform:matrix(1.0296,0.0006,0,1,0,0);">Pro</div>
<div class="t" style="left:1620px;top:358px;font-size:12.6px;line-height:12.6px;color:#3fa535;font-weight:700;transform:matrix(0.9698,0.0006,0,1,0,0);">Flura</div>
<div class="t" style="left:1625px;top:372px;font-size:4px;line-height:4px;color:#555;transform:matrix(1.1353,0.0006,0,1,0,0);">Schlagkartei</div>
<div class="t" style="left:1520.4px;top:384px;font-size:7.47px;line-height:7.47px;color:#000;transform:matrix(1.0000,0.0006,0,1,0,0);-webkit-text-stroke:0.22px #000;">genutzt über</div>
<div style="left:1093.3px;top:393.8px;width:558px;height:1px;background:#000;"></div>
<div style="left:1397.2px;top:394px;width:1px;height:84.5px;background:#000;"></div>
<div class="t" style="left:1095.4px;top:413px;font-size:10.67px;line-height:10.67px;color:#000;transform:matrix(1.0000,0.0006,0,1,0,0);-webkit-text-stroke:0.22px #000;">Betriebs-Nr.:</div>
<div class="t" style="left:1095.4px;top:431px;font-size:10.67px;line-height:10.67px;color:#000;transform:matrix(1.0000,0.0006,0,1,0,0);-webkit-text-stroke:0.22px #000;">Schlagname / -Nr.:</div>
<div class="t" style="left:1186.4px;top:430px;font-size:7.47px;line-height:7.47px;color:#000;transform:matrix(1.0000,0.0006,0,1,0,0);-webkit-text-stroke:0.22px #000;">2</div>
<div class="t" style="left:1232.2px;top:431px;font-size:10.67px;line-height:10.67px;color:#000;transform:matrix(1.0000,0.0006,0,1,0,0);-webkit-text-stroke:0.22px #000;">Itzingerweg Becker Bender...</div>
<div class="t" style="left:1095.4px;top:447px;font-size:10.67px;line-height:10.67px;color:#000;transform:matrix(1.0000,0.0006,0,1,0,0);-webkit-text-stroke:0.22px #000;">Größe [ha]:</div>
<div class="t" style="left:1232.2px;top:447px;font-size:10.67px;line-height:10.67px;color:#000;transform:matrix(1.0000,0.0006,0,1,0,0);-webkit-text-stroke:0.22px #000;">0,6828</div>
<div class="t" style="left:1095.4px;top:463px;font-size:10.67px;line-height:10.67px;color:#000;transform:matrix(1.0000,0.0006,0,1,0,0);-webkit-text-stroke:0.22px #000;">Nitratgebiet:</div>
<div class="t" style="left:1232.2px;top:463px;font-size:10.67px;line-height:10.67px;color:#000;transform:matrix(1.0000,0.0006,0,1,0,0);-webkit-text-stroke:0.22px #000;">Nein</div>
<div class="t" style="left:1400.2px;top:413px;font-size:10.67px;line-height:10.67px;color:#000;transform:matrix(1.0000,0.0006,0,1,0,0);-webkit-text-stroke:0.22px #000;">Gemarkung:</div>
<div class="t" style="left:1492.3px;top:413px;font-size:10.67px;line-height:10.67px;color:#000;transform:matrix(1.0000,0.0006,0,1,0,0);-webkit-text-stroke:0.22px #000;">Neckarwestheim</div>
<div class="t" style="left:1400.2px;top:429px;font-size:10.67px;line-height:10.67px;color:#000;transform:matrix(1.0000,0.0006,0,1,0,0);-webkit-text-stroke:0.22px #000;">Dienstbezirk:</div>
<div class="t" style="left:1492.3px;top:429px;font-size:10.67px;line-height:10.67px;color:#000;transform:matrix(1.0000,0.0006,0,1,0,0);-webkit-text-stroke:0.22px #000;">Heilbronn</div>
<div class="t" style="left:1400.2px;top:447px;font-size:10.67px;line-height:10.67px;color:#000;transform:matrix(1.0000,0.0006,0,1,0,0);-webkit-text-stroke:0.22px #000;">Vergleichsgebiet:</div>
<div class="t" style="left:1492.3px;top:447px;font-size:10.67px;line-height:10.67px;color:#000;transform:matrix(1.0000,0.0006,0,1,0,0);-webkit-text-stroke:0.22px #000;">Unterland/Bergstrasse</div>
<div style="left:1093.3px;top:477.6px;width:558px;height:1.4px;background:#000;"></div>
<div style="left:1230.7px;top:478px;width:1px;height:41.5px;background:#000;"></div>
<div class="t" style="left:1095.4px;top:482px;font-size:10.67px;line-height:10.67px;color:#000;transform:matrix(1.0000,0.0006,0,1,0,0);-webkit-text-stroke:0.22px #000;">Beprobungsdatum:</div>
<div class="t" style="left:1095.4px;top:501px;font-size:10.67px;line-height:10.67px;color:#000;transform:matrix(1.0000,0.0006,0,1,0,0);-webkit-text-stroke:0.22px #000;">02.04.2022</div>
<div class="t" style="left:1233.5px;top:482px;font-size:10.67px;line-height:10.67px;color:#000;transform:matrix(1.0000,0.0006,0,1,0,0);-webkit-text-stroke:0.22px #000;">Schicht [cm]</div>
<div class="t" style="left:1233.5px;top:501px;font-size:10.67px;line-height:10.67px;color:#000;transform:matrix(1.0000,0.0006,0,1,0,0);-webkit-text-stroke:0.22px #000;">N</div>
<div class="t" style="left:1241.5px;top:507px;font-size:8px;line-height:8px;color:#000;transform:matrix(1.0000,0.0006,0,1,0,0);-webkit-text-stroke:0.22px #000;">min</div>
<div class="t" style="left:1254.4px;top:501px;font-size:10.67px;line-height:10.67px;color:#000;transform:matrix(1.0000,0.0006,0,1,0,0);-webkit-text-stroke:0.22px #000;">/Nitrat-N [kg N/ha]</div>
<div class="t" style="left:1370.97px;top:482px;font-size:10.67px;line-height:10.67px;color:#000;transform:matrix(1.0000,0.0006,0,1,0,0);-webkit-text-stroke:0.22px #000;">0 - 30</div>
<div class="t" style="left:1434.68px;top:482px;font-size:10.67px;line-height:10.67px;color:#000;transform:matrix(1.0000,0.0006,0,1,0,0);-webkit-text-stroke:0.22px #000;">30 - 60</div>
<div class="t" style="left:1504.98px;top:482px;font-size:10.67px;line-height:10.67px;color:#000;transform:matrix(1.0000,0.0006,0,1,0,0);-webkit-text-stroke:0.22px #000;">60 - 90</div>
<div class="t" style="left:1381.64px;top:501px;font-size:10.67px;line-height:10.67px;color:#000;transform:matrix(1.0000,0.0006,0,1,0,0);-webkit-text-stroke:0.22px #000;">8</div>
<div class="t" style="left:1448.34px;top:501px;font-size:10.67px;line-height:10.67px;color:#000;transform:matrix(1.0000,0.0006,0,1,0,0);-webkit-text-stroke:0.22px #000;">5</div>
<div class="t" style="left:1518.64px;top:501px;font-size:10.67px;line-height:10.67px;color:#000;transform:matrix(1.0000,0.0006,0,1,0,0);-webkit-text-stroke:0.22px #000;">0</div>
<div class="t" style="left:1569.69px;top:482px;font-size:10.67px;line-height:10.67px;color:#000;transform:matrix(1.0000,0.0006,0,1,0,0);-webkit-text-stroke:0.22px #000;">anrechenbar</div>
<div class="t" style="left:1608.53px;top:501px;font-size:10.67px;line-height:10.67px;color:#000;transform:matrix(1.0000,0.0006,0,1,0,0);-webkit-text-stroke:0.22px #000;">= 13</div>
<div style="left:1093.3px;top:519.2px;width:558px;height:1px;background:#000;"></div>
<div style="left:1093.3px;top:533.8px;width:558px;height:1px;background:#3a3a3a;"></div>
<div style="left:1564px;top:534px;width:1px;height:185.5px;background:#000;"></div>
<div class="t" style="left:1095.4px;top:536px;font-size:10.67px;line-height:10.67px;color:#000;transform:matrix(1.0000,0.0006,0,1,0,0);-webkit-text-stroke:0.22px #000;">Hauptfrucht</div>
<div class="t" style="left:1335.5px;top:536px;font-size:10.67px;line-height:10.67px;color:#000;font-weight:700;transform:matrix(1.0000,0.0006,0,1,0,0);-webkit-text-stroke:0.22px #000;">Reben, jede 2. Gasse oder ganzflächig</div>
<div class="t" style="left:1335.5px;top:548px;font-size:10.67px;line-height:10.67px;color:#000;font-weight:700;transform:matrix(1.0000,0.0006,0,1,0,0);-webkit-text-stroke:0.22px #000;">begrünt</div>
<div class="t" style="left:1585.92px;top:536px;font-size:10.67px;line-height:10.67px;color:#000;transform:matrix(1.0000,0.0006,0,1,0,0);-webkit-text-stroke:0.22px #000;">[kg N/ha]</div>
<div class="t" style="left:1095.4px;top:565px;font-size:10.67px;line-height:10.67px;color:#000;transform:matrix(1.0000,0.0006,0,1,0,0);-webkit-text-stroke:0.22px #000;">Ertragserwartung [dt/ha]</div>
<div class="t" style="left:1335.5px;top:565px;font-size:10.67px;line-height:10.67px;color:#000;transform:matrix(1.0000,0.0006,0,1,0,0);-webkit-text-stroke:0.22px #000;">100</div>
<div class="t" style="left:1095.4px;top:581px;font-size:10.67px;line-height:10.67px;color:#000;transform:matrix(1.0000,0.0006,0,1,0,0);-webkit-text-stroke:0.22px #000;">N-Sollwert [kg N/ha]</div>
<div class="t" style="left:1335.5px;top:581px;font-size:10.67px;line-height:10.67px;color:#000;transform:matrix(1.0000,0.0006,0,1,0,0);-webkit-text-stroke:0.22px #000;">70</div>
<div class="t" style="left:1350.9px;top:584px;font-size:7.47px;line-height:7.47px;color:#000;transform:matrix(1.0000,0.0006,0,1,0,0);-webkit-text-stroke:0.22px #000;white-space:pre;word-spacing:0.5px;">(bei  70,00  -  140,00  dt/ha)</div>
<div class="t" style="left:1453.2px;top:581px;font-size:10.67px;line-height:10.67px;color:#000;transform:matrix(1.0000,0.0006,0,1,0,0);-webkit-text-stroke:0.22px #000;">+</div>
<div class="t" style="left:1465.2px;top:581px;font-size:10.67px;line-height:10.67px;color:#000;transform:matrix(1.0000,0.0006,0,1,0,0);-webkit-text-stroke:0.22px #000;">0,00</div>
<div class="t" style="left:1488.5px;top:584px;font-size:7.47px;line-height:7.47px;color:#000;transform:matrix(1.0000,0.0006,0,1,0,0);-webkit-text-stroke:0.22px #000;">(Korrektur)</div>
<div class="t" style="left:1617.76px;top:581px;font-size:10.67px;line-height:10.67px;color:#000;transform:matrix(1.0000,0.0006,0,1,0,0);-webkit-text-stroke:0.22px #000;">70</div>
<div class="t" style="left:1095.4px;top:596px;font-size:7.47px;line-height:7.47px;color:#000;transform:matrix(1.0000,0.0006,0,1,0,0);-webkit-text-stroke:0.22px #000;">(N-Bedarfswert +/- Zu-/Abschlag zu Standardertrag)</div>
<div style="left:1093.3px;top:606.8px;width:558px;height:1px;background:#000;"></div>
<div class="t" style="left:1095.4px;top:610px;font-size:10.67px;line-height:10.67px;color:#000;transform:matrix(1.0000,0.0006,0,1,0,0);-webkit-text-stroke:0.22px #000;">verfügbare N-Menge (N</div>
<div class="t" style="left:1207.3px;top:615px;font-size:8px;line-height:8px;color:#000;transform:matrix(1.0000,0.0006,0,1,0,0);-webkit-text-stroke:0.22px #000;">min</div>
<div class="t" style="left:1220.3px;top:610px;font-size:10.67px;line-height:10.67px;color:#000;transform:matrix(1.0000,0.0006,0,1,0,0);-webkit-text-stroke:0.22px #000;white-space:pre;">/Nitrat-N)  im Boden</div>
<div class="t" style="left:1611.19px;top:610px;font-size:10.67px;line-height:10.67px;color:#000;transform:matrix(1.0000,0.0006,0,1,0,0);-webkit-text-stroke:0.22px #000;">- 13</div>
<div class="t" style="left:1095.4px;top:628px;font-size:10.67px;line-height:10.67px;color:#000;transform:matrix(1.0000,0.0006,0,1,0,0);-webkit-text-stroke:0.22px #000;">N-Lieferung Bodenvorrat (Humusgehalt)</div>
<div class="t" style="left:1335.5px;top:628px;font-size:10.67px;line-height:10.67px;color:#000;transform:matrix(1.0000,0.0006,0,1,0,0);-webkit-text-stroke:0.22px #000;">0 - 4,0 %</div>
<div class="t" style="left:1623.68px;top:628px;font-size:10.67px;line-height:10.67px;color:#000;transform:matrix(1.0000,0.0006,0,1,0,0);-webkit-text-stroke:0.22px #000;">0</div>
<div class="t" style="left:1095.4px;top:644px;font-size:10.67px;line-height:10.67px;color:#000;transform:matrix(1.0000,0.0006,0,1,0,0);-webkit-text-stroke:0.22px #000;">Starke Wüchsigkeit, Umbruch Begrünung oder</div>
<div class="t" style="left:1335.5px;top:644px;font-size:10.67px;line-height:10.67px;color:#000;transform:matrix(1.0000,0.0006,0,1,0,0);-webkit-text-stroke:0.22px #000;">Nein</div>
<div class="t" style="left:1623.68px;top:644px;font-size:10.67px;line-height:10.67px;color:#000;transform:matrix(1.0000,0.0006,0,1,0,0);-webkit-text-stroke:0.22px #000;">0</div>
<div class="t" style="left:1095.4px;top:656px;font-size:10.67px;line-height:10.67px;color:#000;transform:matrix(1.0000,0.0006,0,1,0,0);-webkit-text-stroke:0.22px #000;">Umbruch Leguminosen</div>
<div class="t" style="left:1095.4px;top:672px;font-size:10.67px;line-height:10.67px;color:#000;transform:matrix(1.0000,0.0006,0,1,0,0);-webkit-text-stroke:0.22px #000;">Akuter N-Mangel</div>
<div class="t" style="left:1335.5px;top:672px;font-size:10.67px;line-height:10.67px;color:#000;transform:matrix(1.0000,0.0006,0,1,0,0);-webkit-text-stroke:0.22px #000;">Nein</div>
<div class="t" style="left:1623.68px;top:672px;font-size:10.67px;line-height:10.67px;color:#000;transform:matrix(1.0000,0.0006,0,1,0,0);-webkit-text-stroke:0.22px #000;">0</div>
<div class="t" style="left:1095.4px;top:689px;font-size:10.67px;line-height:10.67px;color:#000;transform:matrix(1.0000,0.0006,0,1,0,0);-webkit-text-stroke:0.22px #000;">Durchwurzelungstiefe, Beprobungstiefe</div>
<div class="t" style="left:1335.5px;top:689px;font-size:10.67px;line-height:10.67px;color:#000;transform:matrix(1.0000,0.0006,0,1,0,0);-webkit-text-stroke:0.22px #000;">90 cm, 60 cm</div>
<div class="t" style="left:1095.4px;top:705px;font-size:10.67px;line-height:10.67px;color:#000;transform:matrix(1.0000,0.0006,0,1,0,0);-webkit-text-stroke:0.22px #000;">Wasserschutzgebiet</div>
<div class="t" style="left:1335.5px;top:705px;font-size:10.67px;line-height:10.67px;color:#000;transform:matrix(1.0000,0.0006,0,1,0,0);-webkit-text-stroke:0.22px #000;">Nein, B-Boden</div>
<div style="left:1093.3px;top:719px;width:558px;height:1.2px;background:#000;"></div>
<div class="t" style="left:1095.4px;top:727px;font-size:10.67px;line-height:10.67px;color:#000;font-style:italic;transform:matrix(1.0000,0.0006,0,1,0,0);-webkit-text-stroke:0.22px #000;">Dieses Attest gilt als Aufzeichnung gemäß DüV §10 Absatz 1 Nr.1.</div>
<div style="left:1458.8px;top:724.2px;width:192.6px;height:18.8px;background:#fff;border:1px solid #000;box-sizing:border-box;"></div>
<div class="t" style="left:1462.6px;top:728px;font-size:10.67px;line-height:10.67px;color:#000;font-weight:700;transform:matrix(1.0000,0.0006,0,1,0,0);-webkit-text-stroke:0.22px #000;">N-Obergrenze (DüV)</div>
<div class="t" style="left:1565.3px;top:728px;font-size:5.5px;line-height:5.5px;color:#000;transform:matrix(1.0000,0.0006,0,1,0,0);-webkit-text-stroke:0.22px #000;">1</div>
<div class="t" style="left:1568.6px;top:728px;font-size:10.67px;line-height:10.67px;color:#000;font-weight:700;transform:matrix(1.0000,0.0006,0,1,0,0);-webkit-text-stroke:0.22px #000;">:</div>
<div class="t" style="left:1591.14px;top:728px;font-size:10.67px;line-height:10.67px;color:#000;font-weight:700;transform:matrix(1.0000,0.0006,0,1,0,0);-webkit-text-stroke:0.22px #000;">57 kg N/ha</div>
<div class="t" style="left:1485px;top:747px;font-size:5.5px;line-height:5.5px;color:#000;transform:matrix(1.0000,0.0006,0,1,0,0);-webkit-text-stroke:0.22px #000;">1</div>
<div class="t" style="left:1493.5px;top:745px;font-size:10.67px;line-height:10.67px;color:#000;transform:matrix(1.0000,0.0006,0,1,0,0);-webkit-text-stroke:0.22px #000;">kultur- und standortbezogen</div>
<div class="t" style="left:1095.4px;top:774px;font-size:10.67px;line-height:10.67px;color:#000;transform:matrix(1.0000,0.0006,0,1,0,0);-webkit-text-stroke:0.22px #000;">Kommentare:</div>
<div class="t" style="left:1095.6px;top:791px;font-size:7.47px;line-height:7.47px;color:#000;transform:matrix(1.0000,0.0006,0,1,0,0);-webkit-text-stroke:0.22px #000;">2</div>
<div class="t" style="left:1105.4px;top:790px;font-size:10.67px;line-height:10.67px;color:#000;transform:matrix(1.0000,0.0006,0,1,0,0);-webkit-text-stroke:0.22px #000;">Schlagname: Itzingerweg Becker Bender</div>
<div class="t" style="left:1105.4px;top:808px;font-size:10.67px;line-height:10.67px;color:#000;transform:matrix(1.0000,0.0006,0,1,0,0);-webkit-text-stroke:0.22px #000;">Schlag-Nr.: 710</div>
<div class="t" style="left:1095.4px;top:824px;font-size:10.67px;line-height:10.67px;color:#000;transform:matrix(1.0000,0.0006,0,1,0,0);-webkit-text-stroke:0.22px #000;">Anrechenbare durchwurzelbare Bodentiefe dieser Kultur überschritten: Tiefere Schichten werden nicht berücksichtigt.</div>
<div style="left:1656px;top:294px;width:15px;height:672px;background:#fafafa;"></div>
<div style="left:1050px;top:951.5px;width:606px;height:14.5px;background:#fafafa;border-radius:0 0 0 8px;"></div>
<svg style="left:1659px;top:295.5px;" width="10" height="8" viewBox="0 0 10 8"><path d="M5 0.800L9.300 7.300H0.700Z" fill="#8c8c8c" stroke="#8c8c8c" stroke-width="0.600" stroke-linejoin="round"/></svg>
<div style="left:1659.2px;top:309px;width:8.8px;height:454.2px;background:#8c8c8c;border-radius:4.4px;"></div>
<svg style="left:1659px;top:939px;" width="10" height="8" viewBox="0 0 10 8"><path d="M5 7.200L9.300 0.700H0.700Z" fill="#8c8c8c" stroke="#8c8c8c" stroke-width="0.600" stroke-linejoin="round"/></svg>
<svg style="left:1055px;top:954px;" width="8" height="10" viewBox="0 0 8 10"><path d="M0.800 5L7.300 0.700V9.300Z" fill="#8c8c8c" stroke="#8c8c8c" stroke-width="0.600" stroke-linejoin="round"/></svg>
<div style="left:1069.3px;top:954.2px;width:535.2px;height:9px;background:#8c8c8c;border-radius:4.5px;"></div>
<svg style="left:1644px;top:954px;" width="8" height="10" viewBox="0 0 8 10"><path d="M7.200 5L0.700 0.700V9.300Z" fill="#8c8c8c" stroke="#8c8c8c" stroke-width="0.600" stroke-linejoin="round"/></svg>
<div style="left:1671px;top:234.8px;width:48px;height:731.2px;background:#f3f3f3;"></div>
<svg style="left:1685.5px;top:414px;" width="19" height="19" viewBox="0 0 19 19"><g fill="none" stroke="#2b2b2b" stroke-width="1.300" stroke-linejoin="round" stroke-linecap="round"><path d="M6.500 16.500H3A1 1 0 0 1 2 15.500V6.800L9.300 1.500L16.600 6.800V9"/><circle cx="10.800" cy="11" r="3.300"/><path d="M13.300 13.600L17.300 17.600"/></g></svg>
<svg style="left:1685px;top:466.8px;" width="20.5" height="18" viewBox="0 0 20.5 18"><defs><linearGradient id="cg" x1="0" y1="0" x2="1" y2="1"><stop offset="0" stop-color="#1a8cff"/><stop offset="1" stop-color="#0038f0"/></linearGradient></defs><path d="M2 0H18A2 2 0 0 1 20 2V12.300A2 2 0 0 1 18 14.300H4.500L0.300 17.800V2A2 2 0 0 1 2 0Z" fill="url(#cg)"/><path d="M10 4.800V9.600M7.600 7.200H12.400" stroke="#fff" stroke-width="1.300"/><circle cx="4.400" cy="7.200" r="0.900" fill="#fff"/><circle cx="15.800" cy="7.200" r="0.900" fill="#fff"/></svg>
<svg style="left:1685.5px;top:517.5px;" width="19" height="19" viewBox="0 0 19 19"><g fill="none" stroke="#2b2b2b" stroke-width="1.300" stroke-linejoin="round"><path d="M3.300 1.500H13.200A1.500 1.500 0 0 1 14.700 3V17.300H3.300A1.800 1.800 0 0 1 1.500 15.500V3.300A1.800 1.800 0 0 1 3.300 1.500Z"/><path d="M14.700 6.800H16A1.500 1.500 0 0 1 17.500 8.300V15.500A1.800 1.800 0 0 1 15.700 17.300H14.700"/><path d="M4.300 5H11.800M4.300 8.200H11.800"/><rect x="4.300" y="11.300" width="3" height="3"/><path d="M9.600 12.800H11.800"/></g></svg>
<svg style="left:1685.5px;top:569px;" width="19" height="19" viewBox="0 0 19 19"><g fill="none" stroke="#2b2b2b" stroke-width="1.300" stroke-linejoin="round" stroke-linecap="round"><path d="M14.500 12.500V16A1.800 1.800 0 0 1 12.700 17.800H3.800A1.800 1.800 0 0 1 2 16V3.300A1.800 1.800 0 0 1 3.800 1.500H12.700A1.800 1.800 0 0 1 14.500 3.300"/><path d="M5 4.300H11"/><path d="M9.300 13.300L9.800 11L16 4.800L17.700 6.500L11.500 12.700Z"/></g></svg>
<svg style="left:1685px;top:622.5px;" width="20" height="17" viewBox="0 0 20 17"><g fill="none" stroke="#2b2b2b" stroke-width="1.300" stroke-linejoin="round"><path d="M5.200 2.300H14.800C17.200 2.300 18.300 7.800 19 12C19.300 14.300 17.300 15.200 16 13.800L13.300 11H6.700L4 13.800C2.700 15.200 0.700 14.300 1 12C1.700 7.800 2.800 2.300 5.200 2.300Z"/></g><path d="M6.500 5.200V8.200M5 6.700H8" stroke="#2b2b2b" stroke-width="1.100"/><circle cx="12.300" cy="6.700" r="0.700" fill="#2b2b2b"/><circle cx="14.300" cy="5.300" r="0.700" fill="#2b2b2b"/><circle cx="14.300" cy="8.100" r="0.700" fill="#2b2b2b"/></svg>
<svg style="left:1685.5px;top:673.5px;" width="19" height="19" viewBox="0 0 19 19"><g fill="none" stroke="#2b2b2b" stroke-width="1.300" stroke-linejoin="round"><path d="M2.200 4.600L4.600 2.200L16.800 14.400L14.400 16.800Z"/><path d="M13.800 2L17 5.200L6 16.200L2.300 17L3 13.200Z"/><path d="M5.500 4.800L6.800 3.500M7.500 6.800L8.800 5.500M12.200 11.500L13.500 10.200M14.200 13.500L15.500 12.200"/></g></svg>
<div style="left:1683.2px;top:723.5px;width:23.8px;height:1.2px;background:#dcdcdc;"></div>
<svg style="left:1687px;top:757px;" width="16" height="16" viewBox="0 0 16 16"><g stroke="#2b2b2b" stroke-width="1.300" fill="none"><path d="M1 3H8.500M11.500 3H15M1 8H3.500M6.500 8H15M1 13H5.500M8.500 13H15M10 1V5M5 6V10M7 11V15"/></g></svg>
</div></div>
</body></html>
